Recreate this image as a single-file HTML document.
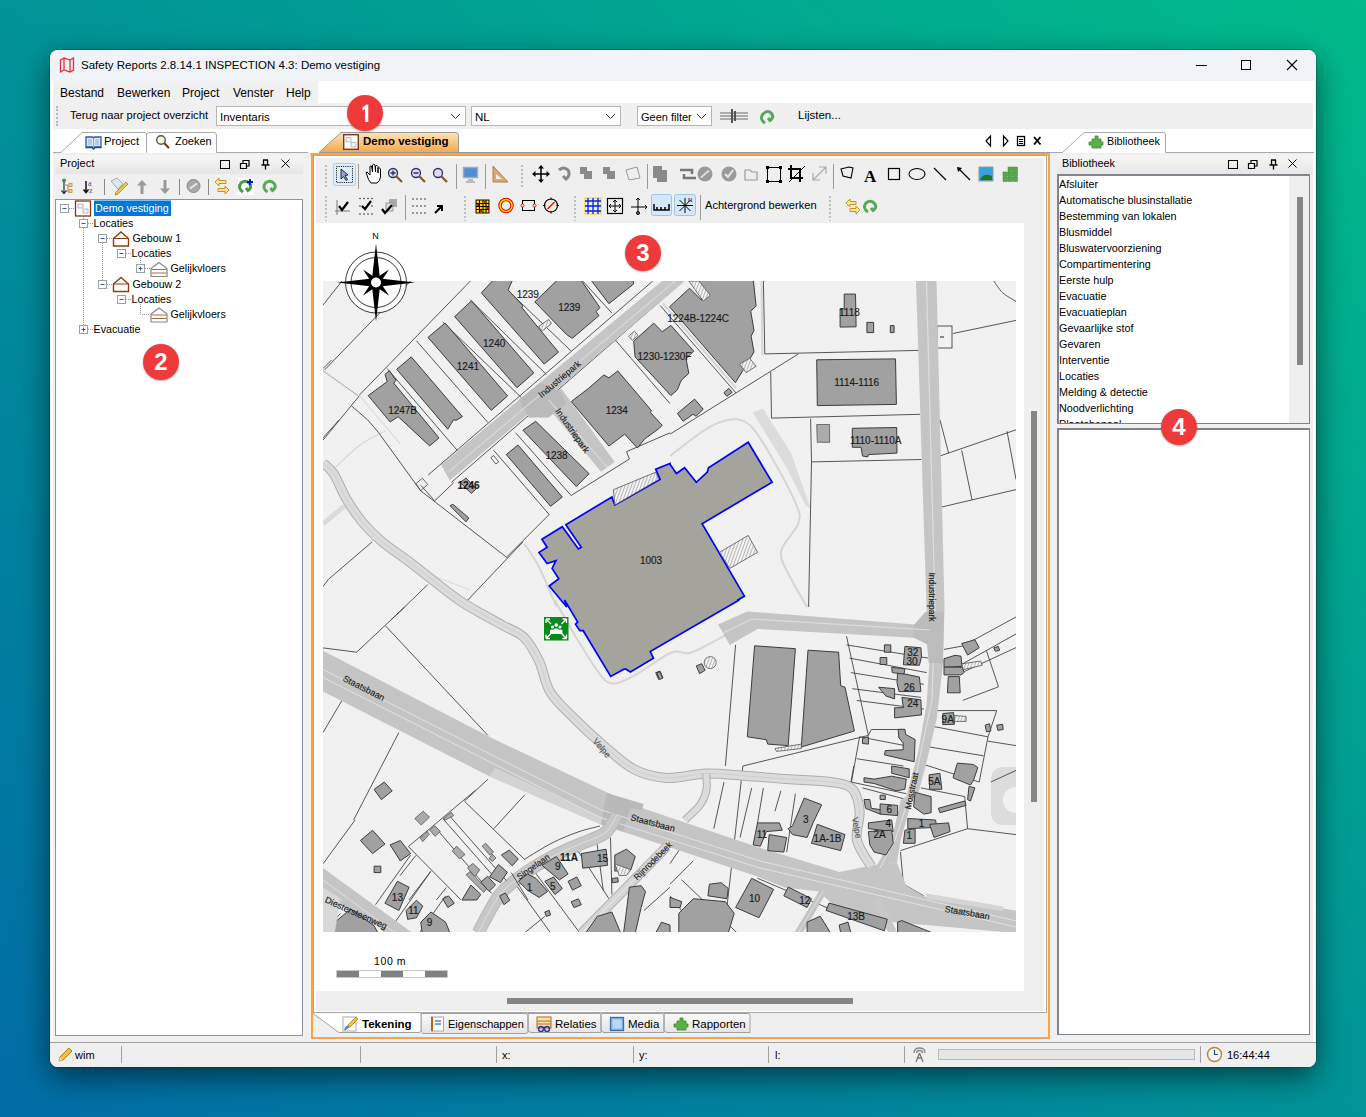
<!DOCTYPE html>
<html><head><meta charset="utf-8">
<style>
*{box-sizing:border-box;margin:0;padding:0}
html,body{width:1366px;height:1117px;overflow:hidden}
body{position:relative;font-family:"Liberation Sans",sans-serif;font-size:12px;color:#000;
background:linear-gradient(to top right,#006ca6 0%,#019397 50%,#00ba8a 100%)}
.a{position:absolute}
.t{position:absolute;white-space:nowrap;line-height:1}
.badge{position:absolute;width:36px;height:36px;border-radius:50%;background:#ef3a3c;color:#fff;font-weight:bold;font-size:24px;text-align:center;line-height:36px;box-shadow:0 1px 2px rgba(0,0,0,.3)}
.combo{position:absolute;background:#fff;border:1px solid #b6b6b6;height:20px}
.combo span{position:absolute;left:3px;top:4px;font-size:11.5px;white-space:nowrap}
.chev{position:absolute;right:4px;top:5px}
.ph{position:absolute;height:20px;background:linear-gradient(#f6f6f6,#e6e6e6)}
.sep{position:absolute;width:1px;background:#a0a0a0}
</style></head><body>
<!-- window -->
<div class="a" style="left:50px;top:50px;width:1266px;height:1017px;background:#f0f0f0;border-radius:8px;box-shadow:0 10px 30px rgba(0,0,0,.55),0 0 0 1px rgba(0,0,0,.18)"></div>
<!-- title bar -->
<div class="a" style="left:50px;top:50px;width:1266px;height:31px;background:#f0f3f8;border-radius:8px 8px 0 0"></div>
<svg class="a" style="left:59px;top:57px" width="16" height="16" viewBox="0 0 16 16"><path d="M1.5 3 L5 1 L11 3 L14.5 1 V13 L11 15 L5 13 L1.5 15 Z M5 1 V13 M11 3 V15" fill="none" stroke="#e8303c" stroke-width="1.3"/></svg>
<div class="t" style="left:81px;top:60px;font-size:11.5px">Safety Reports 2.8.14.1 INSPECTION 4.3: Demo vestiging</div>
<div class="a" style="left:1196px;top:65px;width:11px;height:1px;background:#000"></div>
<div class="a" style="left:1241px;top:60px;width:10px;height:10px;border:1px solid #000"></div>
<svg class="a" style="left:1286px;top:59px" width="12" height="12"><path d="M1 1L11 11M11 1L1 11" stroke="#000" stroke-width="1.1"/></svg>
<!-- menu bar -->
<div class="a" style="left:53px;top:81px;width:1260px;height:22px;background:#fff"></div>
<div class="a" style="left:53px;top:81px;width:265px;height:22px;background:#f0f0f0"></div>
<div class="t" style="left:60px;top:87px">Bestand</div>
<div class="t" style="left:117px;top:87px">Bewerken</div>
<div class="t" style="left:182px;top:87px">Project</div>
<div class="t" style="left:233px;top:87px">Venster</div>
<div class="t" style="left:286px;top:87px">Help</div>
<!-- toolbar -->
<div class="a" style="left:53px;top:103px;width:1260px;height:26px;background:#f0f0f0"></div>
<div class="a" style="left:56px;top:106px;width:2px;height:20px;border-left:2px dotted #b8b8b8"></div>
<div class="t" style="left:70px;top:110px;font-size:11.2px">Terug naar project overzicht</div>
<div class="combo" style="left:216px;top:106px;width:250px"><span>Inventaris</span><svg class="chev" width="11" height="8"><path d="M1 2L5.5 6.5L10 2" fill="none" stroke="#333"/></svg></div>
<div class="combo" style="left:471px;top:106px;width:150px"><span>NL</span><svg class="chev" width="11" height="8"><path d="M1 2L5.5 6.5L10 2" fill="none" stroke="#333"/></svg></div>
<div class="combo" style="left:637px;top:106px;width:75px"><span style="font-size:11px">Geen filter</span><svg class="chev" width="11" height="8"><path d="M1 2L5.5 6.5L10 2" fill="none" stroke="#333"/></svg></div>
<svg class="a" style="left:719px;top:108px" width="30" height="16"><path d="M1 5H29M1 8H29M1 11H29" stroke="#666" stroke-width="1"/><path d="M13 1V15M16 3V13" stroke="#555" stroke-width="2"/></svg>
<div class="t" style="left:798px;top:110px;font-size:11.5px">Lijsten...</div>
<svg class="a" style="left:759px;top:108px" width="17" height="17"><path d="M6 15Q0 11 4 6Q9 1 13 6Q15 10 11 12.5L9 10" stroke="#5aa85a" stroke-width="3" fill="none"/></svg>
<!-- tab strip white -->
<div class="a" style="left:53px;top:129px;width:1260px;height:24px;background:#fff"></div>
<!-- status bar -->
<div class="a" style="left:50px;top:1042px;width:1266px;height:1px;background:#a0a0a0"></div>
<div class="a" style="left:50px;top:1043px;width:1266px;height:24px;background:#efefef;border-radius:0 0 8px 8px"></div>

<!-- LEFT PANEL -->
<div class="a" style="left:51px;top:81px;width:2px;height:961px;background:#fff"></div>
<svg class="a" style="left:53px;top:129px" width="255" height="25">
<path d="M0 23.5H8L29 3.5Q30 3.5 31 3.5H92Q93 3.5 93.5 5V23.5M93.5 23.5V6Q94 3.5 96 3.5H161Q163 3.5 163.5 6V23.5H255" fill="#fff" stroke="#a9a9a9" stroke-width="1"/>
</svg>
<!-- book icon -->
<svg class="a" style="left:85px;top:135px" width="17" height="15" viewBox="0 0 17 15"><path d="M1 2H7Q8.5 2 8.5 3.5Q8.5 2 10 2H16V12H10Q8.5 12 8.5 13.5Q8.5 12 7 12H1Z" fill="#dfe9f5" stroke="#2a5d9a" stroke-width="1.3"/><path d="M8.5 3.5V13.5M3 5H7M3 7H7M3 9H7M10 5H14M10 7H14M10 9H14" stroke="#7a9ac0" stroke-width=".8"/><path d="M0.5 12.5H7L8.5 14L10 12.5H16.5" stroke="#1f4f8a" stroke-width="1.5" fill="none"/></svg>
<div class="t" style="left:104px;top:136px;font-size:11.3px">Project</div>
<svg class="a" style="left:155px;top:134px" width="16" height="16" viewBox="0 0 16 16"><circle cx="6" cy="6" r="4.3" fill="#f8f4d8" stroke="#555" stroke-width="1.4"/><path d="M9.3 9.3L14 14" stroke="#6a3d1a" stroke-width="2.2"/></svg>
<div class="t" style="left:175px;top:136px;font-size:11px">Zoeken</div>
<!-- panel header -->
<div class="ph" style="left:55px;top:155px;width:248px;height:19px"></div>
<div class="t" style="left:60px;top:158px;font-size:11px">Project</div>
<div class="a" style="left:220px;top:160px;width:10px;height:9px;border:1.2px solid #000"></div>
<svg class="a" style="left:239px;top:159px" width="12" height="11"><path d="M1.5 4.5H7.5V9.5H1.5Z M4 4.5V1.5H10V7H7.5" fill="none" stroke="#000" stroke-width="1.2"/></svg>
<svg class="a" style="left:261px;top:159px" width="9" height="11"><path d="M2.5 1V6M6.5 1V6M2 1H7M0.5 6H8.5M4.5 6V10.5" fill="none" stroke="#000" stroke-width="1.3"/></svg>
<svg class="a" style="left:281px;top:159px" width="9" height="9"><path d="M.5 .5L8.5 8.5M8.5 .5L.5 8.5" stroke="#000" stroke-width="1"/></svg>
<!-- panel toolbar -->
<svg class="a" style="left:56px;top:176px" width="240" height="22">
<circle cx="8" cy="4.5" r="2" fill="#3a9a4a"/><path d="M8 6V17M5.5 14.5L8 17.5L10.5 14.5" stroke="#333" stroke-width="1.2" fill="none"/><path d="M8 9H12V16H13" stroke="#888" fill="none"/><rect x="13" y="7.5" width="3" height="3" fill="#f5d56a" stroke="#c0902a" stroke-width=".8"/><rect x="13" y="13.5" width="3" height="3" fill="#f5d56a" stroke="#c0902a" stroke-width=".8"/>
<g transform="translate(2 0)"><path d="M28 5V16M25.5 13.5L28 16.5L30.5 13.5" stroke="#111" stroke-width="1.5" fill="none"/><text x="30" y="10" font-size="8" fill="#3a4aaa" font-family="Liberation Serif">a</text><text x="31" y="17" font-size="8" fill="#8a3a9a" font-family="Liberation Serif">z</text></g>
<rect x="48" y="3" width="1" height="16" fill="#888"/>
<g transform="translate(7 0)"><path d="M48 5L54 2L60 8L55 13Z" fill="#d8e8f5" stroke="#999" stroke-width=".8"/><path d="M53 16L63 6L65 8L55 18L52 19Z" fill="#f3c340" stroke="#b87b20" stroke-width=".8"/></g>
<path d="M86 4L81 9.5H84.5V18H87.5V9.5H91Z" fill="#9a9a9a"/>
<path d="M109 18L104 12.5H107.5V4H110.5V12.5H114Z" fill="#9a9a9a"/>
<rect x="123" y="3" width="1" height="16" fill="#888"/>
<circle cx="137.5" cy="10" r="6.5" fill="#a8a8a8" stroke="#8a8a8a"/><path d="M134 12.5L141 7.5" stroke="#e8e8e8" stroke-width="2"/>
<rect x="152" y="3" width="1" height="16" fill="#888"/>
<g transform="translate(1 0)"><path d="M158 6L162 2V4.5H169V7.5H162V10Z M172 14L168 10V12.5H161V15.5H168V18Z" fill="#fbe6a0" stroke="#c8921e" stroke-width="1"/></g>
<g transform="translate(4 0)"><rect x="178" y="2" width="16" height="17" fill="#fff"/>
<path d="M183 16Q177 12 181 7Q186 3 190 8Q192 12 188 14.5L186 12" stroke="#4a9a4a" stroke-width="3" fill="none"/><path d="M190 3V9M187 6H193" stroke="#0010e0" stroke-width="1.8"/></g>
<g transform="translate(5.5 0)"><path d="M206 16Q200 12 204 7Q209 3 213 8Q215 12 211 14.5L209 12" stroke="#5aa85a" stroke-width="3" fill="none"/></g>
</svg>
<!-- tree box -->
<div class="a" style="left:55px;top:199px;width:248px;height:837px;background:#fff;border:1px solid #8b949e"></div>
<svg class="a" style="left:56px;top:200px" width="246" height="140" font-family="Liberation Sans" font-size="10.7">
<g stroke="#999" stroke-dasharray="1 1" fill="none">
<path d="M13 8.5H19 M27.5 28V125 M32 23.5H37 M32 129.5H37 M46.5 43V80 M51 38.5H56 M51 84.5H56 M70 53.5H75 M70 99.5H75 M89 68.5H94 M84.5 104V114.5H94 M84.5 58V64 M27.5 14V19"/>
</g>
<g fill="#fff" stroke="#98a0a8">
<rect x="4.5" y="4.5" width="8" height="8"/>
<rect x="23.5" y="19.5" width="8" height="8"/>
<rect x="42.5" y="34.5" width="8" height="8"/>
<rect x="61.5" y="49.5" width="8" height="8"/>
<rect x="80.5" y="64.5" width="8" height="8"/>
<rect x="42.5" y="80.5" width="8" height="8"/>
<rect x="61.5" y="95.5" width="8" height="8"/>
<rect x="23.5" y="125.5" width="8" height="8"/>
</g>
<g stroke="#3a5aa0" stroke-width="1">
<path d="M6.5 8.5H10.5 M25.5 23.5H29.5 M44.5 38.5H48.5 M63.5 53.5H67.5 M82.5 68.5H86.5 M84.5 66.5V70.5 M44.5 84.5H48.5 M63.5 99.5H67.5 M25.5 129.5H29.5 M27.5 127.5V131.5"/>
</g>
<!-- doc icon -->
<rect x="19.5" y="1" width="15" height="15" fill="#fff" stroke="#7a3a1a" stroke-width="1.3"/>
<path d="M22 4H27V8H22Z M27 9H32V13H27Z" fill="#f4f4f4" stroke="#aaa" stroke-width=".8"/>
<rect x="38" y="0.5" width="77" height="15.5" fill="#0078d7"/>
<text x="39" y="12" fill="#fff">Demo vestiging</text>
<text x="37.5" y="27">Locaties</text>
<!-- house icons -->
<g fill="#fff" stroke="#8a3d10" stroke-width="1.4">
<path d="M57.5 38.5L65 32L72.5 38.5V46H57.5Z"/><path d="M57.5 38.5H72.5" stroke-width="1"/>
<path d="M57.5 84L65 77.5L72.5 84V91.5H57.5Z"/><path d="M57.5 84H72.5" stroke-width="1"/>
</g>
<text x="76.5" y="42">Gebouw 1</text>
<text x="75.5" y="57">Locaties</text>
<g fill="#fff" stroke="#888" stroke-width="1.2">
<path d="M95 68.5L103 62.5L111 68.5V76.5H95Z"/>
<path d="M95 114L103 108L111 114V122H95Z"/>
</g>
<path d="M95.5 69.5H110.5M95.5 73H110.5M95.5 115H110.5M95.5 118.5H110.5" stroke="#b06a3a" stroke-width="1"/>
<text x="114.5" y="72">Gelijkvloers</text>
<text x="76.5" y="88">Gebouw 2</text>
<text x="75.5" y="103">Locaties</text>
<text x="114.5" y="118">Gelijkvloers</text>
<text x="37.5" y="133">Evacuatie</text>
</svg>


<!-- CENTER PANEL -->
<!-- doc tab -->
<svg class="a" style="left:308px;top:129px" width="745" height="30">
<defs><linearGradient id="og" x1="0" y1="0" x2="0" y2="1"><stop offset="0" stop-color="#fde3b8"/><stop offset="1" stop-color="#f7a849"/></linearGradient></defs>
<path d="M11 23.5L33 3.5H148Q150 3.5 150.5 6V23.5H11" fill="url(#og)" stroke="#9a9a9a" stroke-width="1"/>
<path d="M150.5 23.5H742" stroke="#9a9a9a" stroke-width="1"/>
<rect x="2.5" y="24" width="739.5" height="2.6" fill="#f7a34a"/>
</svg>
<svg class="a" style="left:343px;top:134px" width="16" height="16"><rect x="0.7" y="0.7" width="14.6" height="14.6" fill="#fff" stroke="#7a3a1a" stroke-width="1.4"/><path d="M3 3.5H8V8H3Z M8 8.5H13V13H8Z" fill="#f3f3f3" stroke="#b0b0b0" stroke-width=".8"/></svg>
<div class="t" style="left:363px;top:136px;font-size:11.5px;font-weight:bold">Demo vestiging</div>
<svg class="a" style="left:984px;top:134px" width="60" height="14">
<path d="M6.5 2L2 7L6.5 12Z" fill="none" stroke="#000" stroke-width="1.2"/>
<path d="M19.5 2L24 7L19.5 12Z" fill="none" stroke="#000" stroke-width="1.2"/>
<rect x="33.5" y="2.5" width="7" height="9" fill="none" stroke="#000" stroke-width="1.3"/><path d="M35 5.5H39M35 7.5H39M35 9.5H39" stroke="#000"/>
<path d="M50 3L56.5 10.5M56.5 3L50 10.5" stroke="#000" stroke-width="1.8"/>
</svg>
<!-- frame -->
<div class="a" style="left:310.5px;top:153px;width:739px;height:885.5px;border:2.6px solid #f7a34a;border-top:none"></div>
<div class="a" style="left:313px;top:155px;width:734px;height:858px;border:1px solid #a8a8a8;background:#fff"></div>
<div class="a" style="left:316px;top:158px;width:728px;height:65px;background:#efefef"></div>
<!-- toolbar icons -->
<svg class="a" style="left:316px;top:158px" width="728" height="65" font-family="Liberation Serif">
<g stroke="#c0c0c0" stroke-width="2" stroke-dasharray="2 2"><path d="M10 7V31M206 7V31M10 38V63M149 38V63M259 38V63M514 38V63"/></g>
<g stroke="#9a9a9a" stroke-width="1"><path d="M42.5 6V31M140.5 6V31M169.5 6V31M331.5 6V31M517.5 6V31M89.5 37V62M384.5 37V62"/></g>
<!-- select btn -->
<rect x="17.5" y="5.5" width="22" height="22" rx="2" fill="#ddeeff" stroke="#a8cdf0"/>
<rect x="20.5" y="8.5" width="16" height="16" fill="none" stroke="#000" stroke-dasharray="1 1.2"/>
<path d="M25 11L25 21L27.5 18.5L30 22.5L31.5 21.5L29 17.5L32 17Z" fill="#9aa0e0" stroke="#000" stroke-width=".8"/>
<!-- hand -->
<path d="M51 17Q49 14 51 14L54 17V9Q54 7.5 55.5 8L56.5 14V7Q57.5 5.5 59 7L59.5 14V8Q61 6.5 62 8.5V15V10Q63.5 9 64.5 11V19Q64 23 61 25H55Q52 22 51 17Z" fill="#fff" stroke="#000" stroke-width="1"/>
<!-- zooms -->
<g stroke="#2a2a6a" stroke-width="1.3" fill="#dde" ><circle cx="77" cy="15" r="4.5"/><circle cx="100" cy="15" r="4.5"/><circle cx="122" cy="15" r="4.5"/></g>
<g stroke="#8a5a20" stroke-width="2.3"><path d="M80.5 18.5L86 24M103.5 18.5L109 24M125.5 18.5L131 24"/></g>
<path d="M74.5 15H79.5M77 12.5V17.5M97.5 15H102.5" stroke="#2a2a6a" stroke-width="1.3"/>
<!-- monitor -->
<rect x="147.5" y="9.5" width="14" height="10" fill="#4a90d9" stroke="#aaa" stroke-width="1.5"/><path d="M152 22H157M150 24H159" stroke="#aaa" stroke-width="1.5"/>
<!-- ruler -->
<path d="M177 8V24H192Z" fill="#d8aa70" stroke="#b08040"/><path d="M180 16V21H186Z" fill="#efefef"/>
<!-- move -->
<path d="M225 8V24M217 16H233" stroke="#000" stroke-width="1.5"/><path d="M225 7L222 10.5H228ZM225 25L222 21.5H228ZM216 16L219.5 13V19ZM234 16L230.5 13V19Z" fill="#000"/>
<path d="M243 12Q248 8 252 12Q255 17 250 21L247 18" fill="none" stroke="#888" stroke-width="3"/>
<g fill="#8a8a8a"><rect x="264" y="9" width="7" height="7"/><rect x="268" y="13" width="8" height="8"/><rect x="287" y="9" width="7" height="7"/><rect x="291" y="13" width="8" height="8"/><rect x="337" y="8" width="9" height="12"/><rect x="341" y="12" width="10" height="12"/></g>
<path d="M310 12L321 9L324 20L313 22Z" fill="none" stroke="#999"/>
<path d="M364 12H376V16M380 20H368V16" fill="none" stroke="#777" stroke-width="2.5"/>
<circle cx="389" cy="16" r="7.5" fill="#9a9a9a"/><path d="M385 19.5L393 12.5" stroke="#ddd" stroke-width="2"/>
<circle cx="413" cy="16" r="7.5" fill="#9a9a9a"/><path d="M409 16L412 19L417 12" stroke="#e8e8e8" stroke-width="2" fill="none"/>
<path d="M429 12H434L436 14H441V22H429Z" fill="none" stroke="#999" stroke-width="1.2"/>
<rect x="451.5" y="9.5" width="13" height="14" fill="none" stroke="#000"/><g fill="#000"><rect x="450" y="8" width="3" height="3"/><rect x="463" y="8" width="3" height="3"/><rect x="450" y="22" width="3" height="3"/><rect x="463" y="22" width="3" height="3"/></g>
<path d="M475 7V20H487M472 11H484V24" fill="none" stroke="#000" stroke-width="2"/><path d="M473 24L489 8" stroke="#000" stroke-width="1"/>
<path d="M497 22L510 9M503 9H510V16M504 22H497V15" fill="none" stroke="#aaa" stroke-width="1.2"/>
<path d="M525 11L533 9L537 10L535 20L527 18Z" fill="none" stroke="#000" stroke-width="1.1"/>
<text x="548" y="24" font-size="17" font-weight="bold">A</text>
<rect x="572.5" y="10.5" width="11" height="11" fill="none" stroke="#000" stroke-width="1.2"/>
<ellipse cx="601" cy="16" rx="8" ry="5.5" fill="none" stroke="#000" stroke-width="1.1"/>
<path d="M618 10L630 22" stroke="#000" stroke-width="1.2"/><path d="M642 10L654 22" stroke="#000" stroke-width="1.2"/><path d="M641 9L646 10L642 14Z" fill="#000"/>
<rect x="663" y="9" width="14" height="14" fill="#3aa0e0" stroke="#999"/><path d="M664 22Q667 14 676 18V22Z" fill="#1a7a20"/>
<g fill="#5aa84a" stroke="#3a8a3a" stroke-width=".5"><rect x="692" y="9" width="4.5" height="4.5"/><rect x="697" y="9" width="4.5" height="4.5"/><rect x="687" y="14" width="4.5" height="4.5"/><rect x="692" y="14" width="4.5" height="4.5"/><rect x="697" y="14" width="4.5" height="4.5"/><rect x="687" y="19" width="4.5" height="4.5"/><rect x="692" y="19" width="4.5" height="4.5"/><rect x="697" y="19" width="4.5" height="4.5"/></g>
<!-- row 2 -->
<path d="M21 42V57M19 53H34" stroke="#777" stroke-width="1"/><path d="M23 48L26 52L32 44" fill="none" stroke="#000" stroke-width="2.2"/>
<g fill="#000"><circle cx="44" cy="40.5" r=".7"/><circle cx="48" cy="40.5" r=".7"/><circle cx="52" cy="40.5" r=".7"/><circle cx="56" cy="40.5" r=".7"/><circle cx="44" cy="56" r=".7"/><circle cx="48" cy="56" r=".7"/><circle cx="52" cy="56" r=".7"/><circle cx="56" cy="56" r=".7"/><circle cx="44" cy="48" r=".7"/><circle cx="56" cy="48" r=".7"/></g>
<path d="M46 48L49 51L55 43" fill="none" stroke="#000" stroke-width="2.2"/>
<rect x="73" y="41" width="8" height="8" fill="#aaa"/><rect x="70" y="45" width="7" height="8" fill="#ddd" stroke="#888" stroke-width=".8"/><path d="M66 51L69 55L76 47" fill="none" stroke="#000" stroke-width="2.2"/>
<g fill="#000"><circle cx="97" cy="41" r=".7"/><circle cx="101" cy="41" r=".7"/><circle cx="105" cy="41" r=".7"/><circle cx="109" cy="41" r=".7"/><circle cx="97" cy="48" r=".7"/><circle cx="101" cy="48" r=".7"/><circle cx="105" cy="48" r=".7"/><circle cx="109" cy="48" r=".7"/><circle cx="97" cy="55" r=".7"/><circle cx="101" cy="55" r=".7"/><circle cx="105" cy="55" r=".7"/><circle cx="109" cy="55" r=".7"/></g>
<path d="M119 55L125 49M121 48H126V53" fill="none" stroke="#000" stroke-width="2"/>
<rect x="159" y="41" width="15" height="15" fill="#fff"/><rect x="160" y="42" width="13" height="13" fill="#ffd800" stroke="#000"/><path d="M163.5 42V55M167 42V55M170 42V55M160 45.5H173M160 48.5H173M160 51.5H173" stroke="#000" stroke-width="1"/><g fill="#e00"><rect x="161" y="46" width="2" height="2"/><rect x="168" y="43" width="2" height="2"/><rect x="164" y="52" width="2" height="2"/><rect x="171" y="49" width="2" height="2"/></g>
<circle cx="190" cy="47.5" r="6" fill="none" stroke="#e00" stroke-width="3.5"/><circle cx="190" cy="47.5" r="6" fill="none" stroke="#ffe000" stroke-width="1.5"/>
<rect x="206.5" y="42.5" width="12" height="10" fill="none" stroke="#000"/><circle cx="206.5" cy="47.5" r="1.5" fill="#fff" stroke="#e00"/><circle cx="218.5" cy="47.5" r="1.5" fill="#fff" stroke="#e00"/>
<circle cx="235" cy="47.5" r="6.5" fill="#f4f0e0" stroke="#000" stroke-width="1.2"/><path d="M231.5 51L238.5 44" stroke="#e00" stroke-width="1.3"/><path d="M235 39.5V42M235 53V55.5M227 47.5H229.5M240.5 47.5H243" stroke="#000"/>
<rect x="269" y="40" width="16" height="16" fill="none" stroke="#ffd000" stroke-width="1"/><path d="M272 40V56M277 40V56M282 40V56M269 43H285M269 48H285M269 53H285" stroke="#0020e0" stroke-width="1.3"/>
<rect x="291.5" y="40.5" width="15" height="15" fill="none" stroke="#000" stroke-width="1.2"/><path d="M299 42V54M293 48H305M297 44L299 42L301 44M297 52L299 54L301 52M295 46L293 48L295 50M303 46L305 48L303 50" fill="none" stroke="#000"/>
<path d="M322 40V56M315 49H331M320 42L322 40L324 42M329 47L331 49L329 51" fill="none" stroke="#000" stroke-width="1"/><circle cx="322" cy="55" r="1.5" fill="none" stroke="#000"/>
<rect x="335.5" y="36.5" width="20" height="21" rx="2" fill="#d4e8fa" stroke="#9ac4ec"/>
<path d="M338 46V52H353V46M341 49V52M345 49V52M349 49V52" fill="none" stroke="#000" stroke-width="1.5"/>
<rect x="358.5" y="36.5" width="21" height="21" rx="2" fill="#d4e8fa" stroke="#9ac4ec"/>
<path d="M369 40V55M361 47.5H377M363.5 42L374.5 53M374.5 42L363.5 53" stroke="#000" stroke-width="1"/><text x="372" y="44" font-size="6" font-family="Liberation Sans">N</text>
<path d="M530 45L534 41V43.5H540V46.5H534V49ZM544 52L540 48V50.5H534V53.5H540V56Z" fill="#fbe6a0" stroke="#c8921e" stroke-width="1"/>
<path d="M552 54Q546 50 550 45Q555 41 559 46Q561 50 557 52.5L555 50" stroke="#5aa85a" stroke-width="3" fill="none"/>
</svg>
<div class="t" style="left:705px;top:200px;font-size:11.1px">Achtergrond bewerken</div>
<!-- scrollbars -->
<div class="a" style="left:1024px;top:223px;width:20px;height:768px;background:#efefef"></div>
<div class="a" style="left:1031px;top:411px;width:6px;height:391px;background:#858585"></div>
<div class="a" style="left:316px;top:991px;width:728px;height:20px;background:#efefef"></div>
<div class="a" style="left:507px;top:998px;width:346px;height:6px;background:#858585"></div>
<div class="a" style="left:313px;top:1012px;width:734px;height:1px;background:#a8a8a8"></div>
<!-- MAP -->
<!--MAPSTART--><svg class="a" style="left:0;top:0" width="1366" height="1117" font-family="Liberation Sans">
<defs><clipPath id="mc"><rect x="323" y="281" width="693" height="651"/></clipPath>
<pattern id="hat" width="3" height="3" patternUnits="userSpaceOnUse" patternTransform="rotate(20)"><rect width="3" height="3" fill="#f4f4f4"/><path d="M0 0V3" stroke="#777" stroke-width="1"/></pattern></defs>
<g clip-path="url(#mc)">
<rect x="323" y="281" width="693" height="651" fill="#f1f1f1"/>
<polygon points="752.6,412.3 762.8,408.5 791.1,453.1 810.6,508.6 805.7,505.6 786.7,467.7" fill="#dcdcdc"/>
<rect x="991" y="767" width="60" height="58" rx="12" fill="#dcdcdc"/><circle cx="1016" cy="800" r="13" fill="#f1f1f1"/>
<path d="M670.0,456.0 C675.8,451.7 694.8,435.9 705.0,429.8 C715.2,423.7 723.7,420.3 731.3,419.6 C738.8,418.8 743.9,419.8 750.2,425.4 C756.5,431.0 761.7,440.2 769.2,453.1 C776.7,466.0 790.6,491.1 795.4,502.7 C800.3,514.4 800.8,514.9 798.4,523.1 C795.9,531.4 781.8,542.6 780.9,552.3 C779.9,562.0 788.2,572.4 792.5,581.5 C796.9,590.6 804.7,602.6 807.1,606.9" fill="none" stroke="#d6d6d6" stroke-width="2" stroke-linecap="butt" stroke-linejoin="round" />
<path d="M554.7,600.0 C558.7,607.0 571.5,629.6 578.8,641.7 C586.2,653.8 593.1,665.5 598.6,672.5 C604.1,679.4 605.9,682.9 611.8,683.5 C617.6,684.0 623.9,680.9 633.7,675.8 C643.6,670.6 661.6,656.6 671.1,652.7 C680.6,648.9 682.4,655.3 690.8,652.7 C699.3,650.1 712.8,641.7 721.6,637.3 C730.4,632.9 739.9,628.2 743.5,626.4" fill="none" stroke="#d6d6d6" stroke-width="2" stroke-linecap="butt" stroke-linejoin="round" />
<path d="M524.4,543.7 C526.8,547.5 533.6,556.5 539.0,567.0 C544.3,577.6 553.6,600.3 556.5,607.0" fill="none" stroke="#d6d6d6" stroke-width="2" stroke-linecap="butt" stroke-linejoin="round" />
<path d="M335.5,467.4 C339.6,463.7 351.6,451.1 360.0,445.0 C368.4,438.9 381.4,433.1 385.7,430.7" fill="none" stroke="#d8d8d8" stroke-width="1.2" stroke-linecap="butt" stroke-linejoin="round" />
<path d="M336.0,470.0 C339.7,478.3 347.3,505.0 358.0,520.0 C368.7,535.0 381.3,548.3 400.0,560.0 C418.7,571.7 458.3,585.0 470.0,590.0" fill="none" stroke="#d8d8d8" stroke-width="1" stroke-linecap="butt" stroke-linejoin="round" />
<polyline points="323.0,305.1 342.0,281.0" fill="none" stroke="#444" stroke-width="0.9" />
<polyline points="324.5,370.0 410.6,281.0" fill="none" stroke="#444" stroke-width="0.9" />
<polyline points="359.5,394.9 470.4,281.0" fill="none" stroke="#444" stroke-width="0.9" />
<polyline points="323.0,370.8 358.0,395.6" fill="none" stroke="#999" stroke-width="0.9" />
<polyline points="359.5,395.6 323.0,440.1" fill="none" stroke="#444" stroke-width="0.9" />
<polyline points="359.5,395.6 400.4,444.0" fill="none" stroke="#cfcfcf" stroke-width="0.9" />
<polyline points="351.5,405.8 367.8,420.0 378.5,432.5 420.6,490.7" fill="none" stroke="#444" stroke-width="0.9" />
<path d="M351.5,405.8 C354.0,407.4 362.3,411.5 366.8,415.3 C371.3,419.1 375.3,423.6 378.5,428.4 C381.6,433.2 384.5,441.4 385.8,444.0" fill="none" stroke="#444" stroke-width="0.9" stroke-linecap="butt" stroke-linejoin="round" opacity="0"/>
<polyline points="387.2,368.6 457.2,450.3" fill="none" stroke="#444" stroke-width="0.9" />
<polyline points="416.4,340.8 487.9,422.5" fill="none" stroke="#444" stroke-width="0.9" />
<polyline points="442.7,321.9 521.5,397.7" fill="none" stroke="#444" stroke-width="0.9" />
<polyline points="470.4,300.0 546.3,374.4" fill="none" stroke="#444" stroke-width="0.9" />
<polyline points="498.1,281.0 571.1,351.0" fill="none" stroke="#444" stroke-width="0.9" />
<polyline points="582.7,281.0 611.9,313.1" fill="none" stroke="#444" stroke-width="0.9" />
<polyline points="428.1,475.1 652.8,281.0" fill="none" stroke="#444" stroke-width="0.9" />
<polyline points="451.4,482.4 670.0,292.7" fill="none" stroke="#444" stroke-width="0.9" />
<polyline points="420.6,490.7 507.4,557.9" fill="none" stroke="#444" stroke-width="0.9" />
<polyline points="434.0,501.5 453.7,482.7" fill="none" stroke="#444" stroke-width="0.9" />
<polyline points="493.7,450.3 549.2,514.5 506.9,556.8" fill="none" stroke="#444" stroke-width="0.9" />
<polyline points="515.6,432.8 571.1,495.5 629.4,459.0 626.5,451.7 670.0,432.8" fill="none" stroke="#444" stroke-width="0.9" />
<polyline points="323.0,586.5 328.4,579.4 372.2,541.8" fill="none" stroke="#444" stroke-width="0.9" />
<polyline points="391.0,620.0 427.7,584.7" fill="none" stroke="#444" stroke-width="0.9" />
<polyline points="466.2,601.7 523.0,541.8" fill="none" stroke="#444" stroke-width="0.9" />
<polyline points="323.0,437.9 339.1,420.0" fill="none" stroke="#444" stroke-width="0.9" />
<polyline points="614.8,339.4 670.0,403.6" fill="none" stroke="#444" stroke-width="0.9" />
<polyline points="323.0,368.6 331.8,359.8" fill="none" stroke="#444" stroke-width="0.9" />
<polyline points="420.8,485.3 433.9,499.9" fill="none" stroke="#444" stroke-width="0.9" />
<polyline points="763.4,281.0 764.8,353.9 919.4,350.4" fill="none" stroke="#444" stroke-width="0.9" />
<polyline points="670.0,434.2 798.4,353.9" fill="none" stroke="#444" stroke-width="0.9" />
<polyline points="770.7,372.0 771.5,418.1 920.0,414.3" fill="none" stroke="#444" stroke-width="0.9" />
<polyline points="810.6,418.7 811.5,461.9 921.5,459.5" fill="none" stroke="#444" stroke-width="0.9" />
<polyline points="811.5,461.9 808.6,606.9" fill="none" stroke="#444" stroke-width="0.9" />
<polyline points="939.9,419.6 948.6,453.1" fill="none" stroke="#444" stroke-width="0.9" />
<polyline points="939.9,456.0 1016.0,429.8" fill="none" stroke="#444" stroke-width="0.9" />
<polyline points="961.7,450.2 972.0,499.8" fill="none" stroke="#444" stroke-width="0.9" />
<polyline points="941.3,507.1 1016.0,489.6" fill="none" stroke="#444" stroke-width="0.9" />
<polyline points="1007.0,431.2 1016.0,479.4" fill="none" stroke="#444" stroke-width="0.9" />
<polyline points="953.0,333.5 1016.0,320.4" fill="none" stroke="#444" stroke-width="0.9" />
<rect x="937" y="326" width="15" height="22" fill="#f1f1f1" stroke="#444" stroke-width=".9"/><path d="M940 337H944" stroke="#222"/>
<path d="M993.8,281.0 C995.3,282.9 998.9,289.3 1002.6,292.7 C1006.3,296.1 1013.8,300.0 1016.0,301.4" fill="none" stroke="#444" stroke-width="0.9" stroke-linecap="butt" stroke-linejoin="round" />
<polyline points="323.0,647.9 356.6,652.2 404.7,607.0" fill="none" stroke="#444" stroke-width="0.9" />
<polyline points="385.7,626.0 487.9,735.4" fill="none" stroke="#444" stroke-width="0.9" />
<polyline points="323.0,732.5 342.0,700.4" fill="none" stroke="#444" stroke-width="0.9" />
<polyline points="353.6,820.0 398.9,732.5" fill="none" stroke="#444" stroke-width="0.9" />
<polyline points="323.0,863.8 355.1,820.0" fill="none" stroke="#444" stroke-width="0.9" />
<polyline points="464.5,801.1 487.9,779.2" fill="none" stroke="#444" stroke-width="0.9" />
<polyline points="493.7,828.8 524.4,795.2" fill="none" stroke="#444" stroke-width="0.9" />
<polyline points="375.5,904.7 410.6,855.1" fill="none" stroke="#444" stroke-width="0.9" />
<polyline points="393.0,925.1 431.0,871.1" fill="none" stroke="#444" stroke-width="0.9" />
<polyline points="419.3,933.0 445.6,895.9" fill="none" stroke="#444" stroke-width="0.9" />
<path d="M525.0,859.0 C529.5,856.3 543.2,847.5 552.0,843.0 C560.8,838.5 570.0,834.8 578.0,832.0 C586.0,829.2 596.3,827.0 600.0,826.0" fill="none" stroke="#444" stroke-width="0.9" stroke-linecap="butt" stroke-linejoin="round" />
<polyline points="515.6,884.3 550.6,933.0" fill="none" stroke="#444" stroke-width="0.9" />
<polyline points="533.1,869.7 579.8,933.0" fill="none" stroke="#444" stroke-width="0.9" />
<polyline points="576.9,849.2 609.0,898.8" fill="none" stroke="#444" stroke-width="0.9" />
<polyline points="595.9,834.6 603.2,890.1" fill="none" stroke="#444" stroke-width="0.9" />
<polyline points="610.5,837.6 611.9,894.5" fill="none" stroke="#444" stroke-width="0.9" />
<polyline points="323.0,933.0 340.5,913.4" fill="none" stroke="#444" stroke-width="0.9" />
<polyline points="524.4,933.0 544.8,916.4" fill="none" stroke="#444" stroke-width="0.9" />
<polyline points="644.0,910.5 670.0,887.2" fill="none" stroke="#444" stroke-width="0.9" />
<polyline points="846.5,636.2 868.4,735.4 742.9,766.0 724.0,932.9" fill="none" stroke="#444" stroke-width="0.9" />
<polyline points="735.6,644.9 725.4,766.0" fill="none" stroke="#444" stroke-width="0.9" />
<polyline points="846.5,644.9 928.2,658.1" fill="none" stroke="#444" stroke-width="0.9" />
<polyline points="849.4,658.1 926.7,672.6" fill="none" stroke="#444" stroke-width="0.9" />
<polyline points="850.9,672.6 923.8,684.3" fill="none" stroke="#444" stroke-width="0.9" />
<polyline points="852.3,688.7 920.9,697.4" fill="none" stroke="#444" stroke-width="0.9" />
<polyline points="856.7,700.4 923.8,709.1" fill="none" stroke="#444" stroke-width="0.9" />
<polyline points="868.4,735.4 871.3,729.5 904.9,729.5" fill="none" stroke="#444" stroke-width="0.9" />
<polyline points="859.6,736.8 912.1,747.0" fill="none" stroke="#444" stroke-width="0.9" />
<polyline points="856.7,758.7 903.4,766.0" fill="none" stroke="#444" stroke-width="0.9" />
<polyline points="853.8,766.0 850.9,782.0" fill="none" stroke="#444" stroke-width="0.9" />
<polyline points="850.9,782.0 906.3,793.7" fill="none" stroke="#444" stroke-width="0.9" />
<polyline points="859.6,736.8 850.9,785.0" fill="none" stroke="#444" stroke-width="0.9" />
<polyline points="862.5,787.9 912.1,801.0" fill="none" stroke="#444" stroke-width="0.9" />
<polyline points="944.0,649.4 962.7,646.0 1016.0,617.0" fill="none" stroke="#444" stroke-width="0.9" />
<polyline points="962.7,700.4 998.5,686.8 986.6,651.1" fill="none" stroke="#444" stroke-width="0.9" />
<polyline points="961.0,664.7 1016.0,634.0" fill="none" stroke="#444" stroke-width="0.9" />
<polyline points="964.4,671.5 1016.0,647.6" fill="none" stroke="#444" stroke-width="0.9" />
<polyline points="935.5,710.6 996.7,710.6 988.0,736.8" fill="none" stroke="#444" stroke-width="0.9" />
<polyline points="934.0,726.6 988.0,736.8" fill="none" stroke="#444" stroke-width="0.9" />
<polyline points="929.6,747.0 983.6,755.8" fill="none" stroke="#444" stroke-width="0.9" />
<polyline points="923.8,764.5 979.2,782.0" fill="none" stroke="#444" stroke-width="0.9" />
<polyline points="920.9,787.9 964.7,796.6" fill="none" stroke="#444" stroke-width="0.9" />
<polyline points="988.0,736.8 979.2,782.0" fill="none" stroke="#444" stroke-width="0.9" />
<polyline points="988.0,741.2 1016.0,745.6" fill="none" stroke="#444" stroke-width="0.9" />
<polyline points="964.7,796.6 967.6,828.7" fill="none" stroke="#444" stroke-width="0.9" />
<polyline points="967.6,828.7 1016.0,834.6" fill="none" stroke="#444" stroke-width="0.9" />
<polyline points="900.5,850.6 967.6,828.7" fill="none" stroke="#444" stroke-width="0.9" />
<polyline points="900.5,852.1 903.4,884.2 923.8,895.8" fill="none" stroke="#444" stroke-width="0.9" />
<polyline points="670.0,884.2 693.3,860.8" fill="none" stroke="#444" stroke-width="0.9" />
<polyline points="670.0,863.7 681.7,846.2" fill="none" stroke="#444" stroke-width="0.9" />
<polyline points="713.8,828.7 724.0,782.0" fill="none" stroke="#444" stroke-width="0.9" />
<polyline points="740.0,837.5 751.7,787.9" fill="none" stroke="#444" stroke-width="0.9" />
<polyline points="757.5,822.9 763.4,787.9" fill="none" stroke="#444" stroke-width="0.9" />
<polyline points="775.0,811.2 780.9,790.8" fill="none" stroke="#444" stroke-width="0.9" />
<polyline points="786.7,852.1 795.4,793.7" fill="none" stroke="#444" stroke-width="0.9" />
<polyline points="681.7,879.8 737.1,932.9" fill="none" stroke="#444" stroke-width="0.9" />
<polyline points="670.0,895.8 699.2,932.9" fill="none" stroke="#444" stroke-width="0.9" />
<polyline points="757.5,878.3 833.4,910.4" fill="none" stroke="#444" stroke-width="0.9" />
<polyline points="990.9,782.0 1016.0,770.4" fill="none" stroke="#444" stroke-width="0.9" />
<polygon points="323.0,650.8 495.2,739.8 608.3,792.9 642.7,808.3 756.0,846.6 839.7,871.9 870.2,865.7 896.8,862.8 906.4,885.7 927.3,898.0 1016.0,910.4 1016.0,933.0 889.2,921.8 832.1,903.7 818.8,891.4 784.6,887.6 756.0,876.1 623.0,831.7 601.0,824.4 489.4,776.3 323.0,691.6" fill="#c5c5c5"/>
<polygon points="489.4,776.3 601.0,824.4 604.0,818.0 495.0,768.0" fill="#d3d3d3"/>
<polygon points="925.4,893.3 1003.4,906.6 1003.4,911.3 927.3,899.0" fill="#d5d5d5"/>
<polygon points="606.9,792.9 643.5,803.9 642.0,809.8 630.3,808.3 623.0,831.7 601.0,824.4 603.9,808.3" fill="#b9b9b9"/>
<polyline points="323.0,669.5 600.0,809.5 760.0,861.0 1016.0,921.0" fill="none" stroke="#e2e2e2" stroke-width="1" />
<polyline points="323.0,677.5 600.0,817.5 760.0,868.0 1016.0,927.0" fill="none" stroke="#e2e2e2" stroke-width="1" />
<polygon points="440.9,464.8 662.2,281.0 685.0,281.0 449.8,480.6" fill="#c5c5c5"/>
<polygon points="539.7,397.6 561.4,388.7 614.8,461.9 601.0,471.7" fill="#c5c5c5"/>
<polygon points="518.9,399.6 540.7,382.8 560.5,391.7 566.4,403.5 548.6,417.4 528.8,417.4" fill="#bababa"/>
<polyline points="448.8,471.7 675.1,281.0" fill="none" stroke="#d8d8d8" stroke-width="1.2" />
<polyline points="548.6,399.6 606.9,466.8" fill="none" stroke="#d8d8d8" stroke-width="1.2" />
<polygon points="916.0,281.0 936.5,281.0 944.5,607.0 942.8,665.3 936.9,717.9 926.7,761.6 915.1,805.4 912.1,800.0 900.7,840.0 896.8,862.8 870.2,866.6 874.2,869.6 891.7,840.4 900.7,800.0 906.3,796.6 918.0,752.9 926.7,703.3 929.6,659.5 926.5,607.0" fill="#c5c5c5"/>
<polyline points="926.5,281.0 935.0,607.0 932.0,700.0 915.0,780.0 895.0,840.0 880.0,868.0" fill="none" stroke="#dedede" stroke-width="1.2" />
<polygon points="718.1,624.5 747.3,611.4 915.1,624.5 930.0,618.0 930.0,638.0 918.0,638.0 757.5,629.0 729.8,645.0" fill="#c5c5c5"/>
<polygon points="913.4,625.5 925.3,611.9 944.0,611.9 943.0,663.0 928.7,663.0 927.0,644.2 913.4,637.6" fill="#bcbcbc"/>
<polyline points="723.0,633.0 752.0,619.0 930.0,630.0" fill="none" stroke="#dedede" stroke-width="1.2" />
<path d="M617.0,815.0 C615.0,818.0 611.3,828.1 605.0,833.0 C598.7,837.9 587.7,840.6 579.0,844.5 C570.3,848.4 561.5,851.8 552.7,856.4 C543.9,861.0 535.2,865.8 526.4,872.2 C517.6,878.6 508.1,884.5 500.0,894.6 C491.9,904.7 481.7,926.6 478.0,933.0" fill="none" stroke="#b8b8b8" stroke-width="13" stroke-linecap="butt" stroke-linejoin="round" />
<path d="M617.0,815.0 C615.0,818.0 611.3,828.1 605.0,833.0 C598.7,837.9 587.7,840.6 579.0,844.5 C570.3,848.4 561.5,851.8 552.7,856.4 C543.9,861.0 535.2,865.8 526.4,872.2 C517.6,878.6 508.1,884.5 500.0,894.6 C491.9,904.7 481.7,926.6 478.0,933.0" fill="none" stroke="#c8c8c8" stroke-width="11" stroke-linecap="butt" stroke-linejoin="round" />
<path d="M617.0,815.0 C615.0,818.0 611.3,828.1 605.0,833.0 C598.7,837.9 587.7,840.6 579.0,844.5 C570.3,848.4 561.5,851.8 552.7,856.4 C543.9,861.0 535.2,865.8 526.4,872.2 C517.6,878.6 508.1,884.5 500.0,894.6 C491.9,904.7 481.7,926.6 478.0,933.0" fill="none" stroke="#e0e0e0" stroke-width="1" stroke-linecap="butt" stroke-linejoin="round" />
<polyline points="666.9,846.4 581.8,933.0" fill="none" stroke="#b0b0b0" stroke-width="10" />
<polyline points="666.9,846.4 581.8,933.0" fill="none" stroke="#d6d6d6" stroke-width="8" />
<polyline points="666.9,846.4 581.8,933.0" fill="none" stroke="#ececec" stroke-width="1" />
<polygon points="818.8,891.4 828.3,889.5 802.6,933.0 794.1,933.0" fill="#c5c5c5"/>
<polyline points="823.5,890.5 798.0,933.0" fill="none" stroke="#e0e0e0" stroke-width="1" />
<polyline points="877.0,900.0 893.0,933.0" fill="none" stroke="#c8c8c8" stroke-width="8" />
<polygon points="323.0,868.1 410.8,931.7 410.8,933.0 384.0,933.0 380.0,928.0 345.0,907.0 323.0,895.0" fill="#c5c5c5"/>
<polyline points="323.0,880.0 395.0,933.0" fill="none" stroke="#e0e0e0" stroke-width="1" />
<polygon points="323.0,913.0 334.0,894.0 341.0,899.0 328.0,920.0" fill="#d3d3d3"/>
<path d="M323.0,463.0 C324.8,464.8 329.8,467.7 333.7,473.7 C337.6,479.7 341.5,490.7 346.3,498.8 C351.1,506.9 356.4,514.9 362.4,522.1 C368.4,529.3 374.4,535.2 382.1,541.8 C389.9,548.4 400.2,555.0 408.9,561.5 C417.5,568.0 425.0,574.2 434.0,581.1 C443.0,588.0 451.4,595.3 462.7,602.6 C474.0,609.9 491.8,619.2 502.0,625.0 C512.2,630.8 517.7,631.2 523.9,637.3 C530.1,643.4 534.9,652.4 539.3,661.5 C543.7,670.6 544.4,682.7 550.3,692.2 C556.1,701.7 565.6,709.8 574.4,718.6 C583.2,727.4 593.1,736.6 603.0,745.0 C612.9,753.4 623.1,763.6 633.7,769.1 C644.3,774.6 654.6,777.2 666.7,777.9 C678.8,778.6 693.4,773.9 706.2,773.5 C719.0,773.1 730.1,774.8 743.5,775.7 C756.9,776.6 772.2,778.1 786.7,779.1 C801.2,780.1 819.6,780.4 830.5,782.0 C841.4,783.6 847.4,784.1 852.3,789.0 C857.1,793.9 858.8,802.6 859.6,811.2 C860.4,819.8 855.0,831.2 857.0,840.4 C859.0,849.6 868.9,862.2 871.3,866.6" fill="none" stroke="#aeaeae" stroke-width="10" stroke-linecap="butt" stroke-linejoin="round" />
<path d="M323.0,463.0 C324.8,464.8 329.8,467.7 333.7,473.7 C337.6,479.7 341.5,490.7 346.3,498.8 C351.1,506.9 356.4,514.9 362.4,522.1 C368.4,529.3 374.4,535.2 382.1,541.8 C389.9,548.4 400.2,555.0 408.9,561.5 C417.5,568.0 425.0,574.2 434.0,581.1 C443.0,588.0 451.4,595.3 462.7,602.6 C474.0,609.9 491.8,619.2 502.0,625.0 C512.2,630.8 517.7,631.2 523.9,637.3 C530.1,643.4 534.9,652.4 539.3,661.5 C543.7,670.6 544.4,682.7 550.3,692.2 C556.1,701.7 565.6,709.8 574.4,718.6 C583.2,727.4 593.1,736.6 603.0,745.0 C612.9,753.4 623.1,763.6 633.7,769.1 C644.3,774.6 654.6,777.2 666.7,777.9 C678.8,778.6 693.4,773.9 706.2,773.5 C719.0,773.1 730.1,774.8 743.5,775.7 C756.9,776.6 772.2,778.1 786.7,779.1 C801.2,780.1 819.6,780.4 830.5,782.0 C841.4,783.6 847.4,784.1 852.3,789.0 C857.1,793.9 858.8,802.6 859.6,811.2 C860.4,819.8 855.0,831.2 857.0,840.4 C859.0,849.6 868.9,862.2 871.3,866.6" fill="none" stroke="#dcdcdc" stroke-width="8" stroke-linecap="butt" stroke-linejoin="round" />
<path d="M323.0,463.0 C324.8,464.8 329.8,467.7 333.7,473.7 C337.6,479.7 341.5,490.7 346.3,498.8 C351.1,506.9 356.4,514.9 362.4,522.1 C368.4,529.3 374.4,535.2 382.1,541.8 C389.9,548.4 400.2,555.0 408.9,561.5 C417.5,568.0 425.0,574.2 434.0,581.1 C443.0,588.0 451.4,595.3 462.7,602.6 C474.0,609.9 491.8,619.2 502.0,625.0 C512.2,630.8 517.7,631.2 523.9,637.3 C530.1,643.4 534.9,652.4 539.3,661.5 C543.7,670.6 544.4,682.7 550.3,692.2 C556.1,701.7 565.6,709.8 574.4,718.6 C583.2,727.4 593.1,736.6 603.0,745.0 C612.9,753.4 623.1,763.6 633.7,769.1 C644.3,774.6 654.6,777.2 666.7,777.9 C678.8,778.6 693.4,773.9 706.2,773.5 C719.0,773.1 730.1,774.8 743.5,775.7 C756.9,776.6 772.2,778.1 786.7,779.1 C801.2,780.1 819.6,780.4 830.5,782.0 C841.4,783.6 847.4,784.1 852.3,789.0 C857.1,793.9 858.8,802.6 859.6,811.2 C860.4,819.8 855.0,831.2 857.0,840.4 C859.0,849.6 868.9,862.2 871.3,866.6" fill="none" stroke="#cfcfcf" stroke-width="1" stroke-linecap="butt" stroke-linejoin="round" />
<polyline points="323.0,523.9 344.5,506.0" fill="none" stroke="#dadada" stroke-width="5" />
<path d="M706.2,773.5 C706.2,776.2 707.5,784.8 706.5,790.0 C705.5,795.2 703.6,800.0 700.0,805.0 C696.4,810.0 687.5,817.5 685.0,820.0" fill="none" stroke="#aeaeae" stroke-width="8" stroke-linecap="butt" stroke-linejoin="round" />
<path d="M706.2,773.5 C706.2,776.2 707.5,784.8 706.5,790.0 C705.5,795.2 703.6,800.0 700.0,805.0 C696.4,810.0 687.5,817.5 685.0,820.0" fill="none" stroke="#dcdcdc" stroke-width="6" stroke-linecap="butt" stroke-linejoin="round" />
<polyline points="663.0,303.5 736.0,388.0" fill="none" stroke="#d6d6d6" stroke-width="2" />
<polyline points="660.2,305.5 735.9,392.9" fill="none" stroke="#444" stroke-width="0.9" />
<polyline points="761.5,281.0 762.5,355.6" fill="none" stroke="#d6d6d6" stroke-width="2" />
<polygon points="481.4,292.9 494.2,279.0 513.0,279.0 508.1,289.9 522.9,305.7 521.9,307.7 558.5,352.2 544.2,364.0" fill="#a1a1a1" stroke="#3c3c3c" stroke-width="1" />
<polygon points="534.8,301.8 558.5,279.0 580.2,279.0 600.0,307.7 596.0,311.6 599.0,315.6 572.3,338.3 566.4,334.4" fill="#a1a1a1" stroke="#3c3c3c" stroke-width="1" />
<polygon points="590.1,279.0 633.6,279.0 633.6,284.0 608.9,303.7" fill="#a1a1a1" stroke="#3c3c3c" stroke-width="1" />
<polygon points="454.7,316.6 471.5,300.8 533.8,372.9 517.0,387.7" fill="#a1a1a1" stroke="#3c3c3c" stroke-width="1" />
<polygon points="428.0,337.4 445.1,323.0 507.6,395.9 491.3,410.3" fill="#a1a1a1" stroke="#3c3c3c" stroke-width="1" />
<polygon points="571.3,401.6 588.1,388.7 603.9,374.9 608.9,377.9 617.8,370.9 651.4,410.5 650.4,412.4 662.2,425.3 659.3,428.3 644.5,439.1 637.5,448.0 624.7,434.2 608.9,446.0" fill="#a1a1a1" stroke="#3c3c3c" stroke-width="1" />
<polygon points="522.9,430.2 535.7,421.3 589.1,473.7 576.3,486.6" fill="#a1a1a1" stroke="#3c3c3c" stroke-width="1" />
<polygon points="506.3,454.6 518.0,445.0 562.3,497.0 550.6,506.3" fill="#a1a1a1" stroke="#3c3c3c" stroke-width="1" />
<polygon points="633.7,341.1 653.8,323.2 662.3,331.8 670.9,325.4 693.8,351.2 686.0,358.3 688.8,373.4 681.7,379.8 680.2,382.7 677.4,389.8 670.9,395.6 635.1,356.9" fill="#a1a1a1" stroke="#3c3c3c" stroke-width="1" />
<polygon points="669.5,306.8 689.6,288.2 701.7,300.3 698.9,279.6 753.3,279.6 756.1,306.1 750.7,311.1 754.0,330.4 751.1,336.1 754.0,351.9 735.4,382.7" fill="#a1a1a1" stroke="#3c3c3c" stroke-width="1" />
<polygon points="739.7,364.1 749.7,358.3 756.1,366.2 746.1,372.7" fill="url(#hat)" stroke="#555" stroke-width="0.8" />
<polygon points="628.7,336.1 634.4,331.1 638.0,335.4 632.3,340.4" fill="url(#hat)" stroke="#555" stroke-width="0.8" />
<polygon points="688.8,281.0 698.9,281.0 710.3,295.3 703.2,301.0" fill="url(#hat)" stroke="#555" stroke-width="0.8" />
<polygon points="538.7,326.5 548.6,319.5 551.6,323.5 541.7,331.4" fill="url(#hat)" stroke="#555" stroke-width="0.8" />
<polygon points="677.4,413.5 694.6,399.1 703.2,409.2 696.0,416.3 693.1,414.2 683.1,421.3" fill="#a1a1a1" stroke="#3c3c3c" stroke-width="1" />
<polygon points="723.9,392.7 728.9,388.4 732.1,392.4 726.8,396.3" fill="#a1a1a1" stroke="#3c3c3c" stroke-width="1" />
<polygon points="396.7,369.3 411.3,356.9 462.4,416.7 455.8,420.4 453.6,419.7 451.4,423.3 447.8,429.2" fill="#a1a1a1" stroke="#3c3c3c" stroke-width="1" />
<polygon points="368.2,395.6 387.2,381.7 385.0,374.4 389.4,370.8 396.0,380.3 393.8,383.2 439.0,437.9 429.6,445.9 398.2,416.7 390.1,421.9" fill="#a1a1a1" stroke="#3c3c3c" stroke-width="1" />
<polygon points="460.2,482.4 466.0,478.0 476.2,488.8 471.3,493.5" fill="#a1a1a1" stroke="#3c3c3c" stroke-width="1" />
<polygon points="450.0,505.7 452.9,504.3 468.9,518.0 466.0,521.8" fill="#a1a1a1" stroke="#3c3c3c" stroke-width="1" />
<polygon points="490.8,457.6 493.7,455.5 498.7,461.9 495.8,464.0" fill="none" stroke="#444" stroke-width="0.8" />
<polygon points="416.1,483.6 422.4,478.2 427.7,484.5 420.6,490.7" fill="none" stroke="#444" stroke-width="0.8" />
<polygon points="816.7,359.8 895.5,358.9 896.4,404.4 817.3,405.6" fill="#a1a1a1" stroke="#3c3c3c" stroke-width="1" />
<polygon points="844.2,294.1 855.5,294.1 856.1,326.8 840.1,327.1 840.1,308.7 844.2,308.7" fill="#a1a1a1" stroke="#3c3c3c" stroke-width="1" />
<polygon points="866.9,322.4 873.6,322.4 873.6,332.6 866.9,332.6" fill="#a1a1a1" stroke="#3c3c3c" stroke-width="1" />
<polygon points="890.3,325.6 894.1,325.6 894.1,332.6 890.3,332.6" fill="#a1a1a1" stroke="#3c3c3c" stroke-width="1" />
<polygon points="852.3,428.3 896.7,427.5 897.0,453.1 868.4,454.6 867.8,456.9 862.5,456.0 861.1,447.3 852.3,447.3" fill="#a1a1a1" stroke="#3c3c3c" stroke-width="1" />
<polygon points="816.7,424.5 829.6,424.5 829.6,442.3 817.3,442.3" fill="#ababab" stroke="#555" stroke-width="0.8" />
<polygon points="541.9,539.3 562.3,526.7 578.4,548.9 581.3,547.2 565.8,524.7 611.9,497.0 614.8,505.1 660.1,479.5 655.7,469.2 670.0,463.4 670.0,464.2 676.4,473.5 684.6,467.7 696.3,482.3 707.3,472.1 708.5,467.7 748.2,442.3 772.1,482.3 702.1,523.7 744.4,596.1 737.1,600.5 739.2,600.0 650.2,651.6 653.5,658.2 630.4,672.0 626.0,669.2 623.9,669.2 610.7,676.4 583.2,630.7 579.9,630.7 575.5,624.2 577.7,622.0 564.6,600.0 566.7,607.0 549.2,586.0 558.8,578.7 552.1,568.5 555.9,560.6 547.1,563.5 539.0,552.4 547.1,547.2" fill="#a4a49c" stroke="#0000ff" stroke-width="1.7"/>
<polygon points="719.6,552.3 748.2,535.4 757.5,552.3 729.8,568.4" fill="url(#hat)" stroke="#555" stroke-width="0.8" />
<polygon points="613.4,489.7 655.7,472.2 658.6,479.5 614.8,505.1" fill="url(#hat)" stroke="#555" stroke-width="0.8" />
<polygon points="374.1,789.4 384.3,782.1 392.2,790.9 381.4,799.6" fill="#a1a1a1" stroke="#3c3c3c" stroke-width="1" />
<polygon points="360.4,840.5 372.6,830.3 384.9,844.0 372.6,853.6" fill="#a1a1a1" stroke="#3c3c3c" stroke-width="1" />
<polygon points="390.1,844.9 400.3,840.5 410.6,853.6 400.3,860.9" fill="#a1a1a1" stroke="#3c3c3c" stroke-width="1" />
<polygon points="374.1,866.2 380.8,866.2 380.8,872.6 374.1,872.6" fill="#a1a1a1" stroke="#3c3c3c" stroke-width="1" />
<polygon points="384.9,903.2 397.4,881.3 409.1,887.2 398.9,910.5" fill="#a1a1a1" stroke="#3c3c3c" stroke-width="1" />
<polygon points="406.2,910.5 416.4,900.3 422.8,906.1 416.4,917.8 407.6,919.3" fill="#a1a1a1" stroke="#3c3c3c" stroke-width="1" />
<polygon points="420.8,922.2 431.0,912.0 445.6,922.2 450.0,933.0 422.2,933.0" fill="#a1a1a1" stroke="#3c3c3c" stroke-width="1" />
<polygon points="442.7,898.8 448.5,895.9 454.3,903.2 447.9,907.6" fill="#a1a1a1" stroke="#3c3c3c" stroke-width="1" />
<polygon points="499.6,895.9 505.4,893.0 509.8,900.3 503.9,904.7" fill="#a1a1a1" stroke="#3c3c3c" stroke-width="1" />
<polygon points="518.5,881.3 527.3,874.0 536.0,878.4 547.7,891.5 539.0,897.4 527.3,890.1" fill="#a1a1a1" stroke="#3c3c3c" stroke-width="1" />
<polygon points="541.9,865.3 556.5,856.5 568.1,874.0 559.4,879.9" fill="#a1a1a1" stroke="#3c3c3c" stroke-width="1" />
<polygon points="544.8,881.3 553.6,877.0 562.3,888.6 555.0,894.5" fill="#a1a1a1" stroke="#3c3c3c" stroke-width="1" />
<polygon points="568.1,881.3 576.9,877.0 581.3,885.7 572.5,890.1" fill="#a1a1a1" stroke="#3c3c3c" stroke-width="1" />
<polygon points="571.1,901.8 578.4,898.8 581.3,904.7 574.0,907.6" fill="#a1a1a1" stroke="#3c3c3c" stroke-width="1" />
<polygon points="544.8,912.0 549.2,910.5 550.6,914.9 546.3,916.4" fill="#a1a1a1" stroke="#3c3c3c" stroke-width="1" />
<polygon points="581.3,853.6 606.1,849.2 607.5,865.3 582.7,868.2" fill="#a1a1a1" stroke="#3c3c3c" stroke-width="1" />
<polygon points="614.8,855.1 626.5,849.2 635.3,856.5 630.9,869.7 614.8,871.1" fill="#a1a1a1" stroke="#3c3c3c" stroke-width="1" />
<polygon points="614.8,863.8 630.9,869.7 626.5,875.5 619.2,875.5" fill="url(#hat)" stroke="#555" stroke-width="0.8" />
<polygon points="611.9,878.4 617.8,877.8 618.3,881.9 612.5,882.8" fill="#a1a1a1" stroke="#3c3c3c" stroke-width="1" />
<polygon points="629.4,887.2 641.1,885.7 645.5,891.5 641.1,907.6 635.3,933.0 623.6,933.0 626.5,910.5" fill="#a1a1a1" stroke="#3c3c3c" stroke-width="1" />
<polygon points="597.3,916.4 611.9,912.0 620.7,933.0 585.7,933.0" fill="#a1a1a1" stroke="#3c3c3c" stroke-width="1" />
<polygon points="324.5,931.7 330.3,925.9 350.8,909.0 374.2,925.9 378.0,933.0 324.0,933.0" fill="#a1a1a1" stroke="#3c3c3c" stroke-width="1" />
<polygon points="655.7,933.0 661.5,922.2 670.0,925.1 670.0,933.0" fill="#a1a1a1" stroke="#3c3c3c" stroke-width="1" />
<polygon points="655.7,672.7 660.1,671.2 663.0,677.9 658.6,679.4" fill="#a1a1a1" stroke="#3c3c3c" stroke-width="1" />
<polygon points="754.6,645.8 795.4,648.7 788.2,745.6 767.7,744.1 766.3,739.7 747.3,736.8" fill="#a1a1a1" stroke="#3c3c3c" stroke-width="1" />
<polygon points="808.0,650.2 838.6,652.2 840.7,685.8 845.0,687.2 854.4,731.0 801.3,747.0" fill="#a1a1a1" stroke="#3c3c3c" stroke-width="1" />
<polygon points="775.0,748.5 801.3,744.1 801.3,748.5 776.5,751.4" fill="url(#hat)" stroke="#555" stroke-width="0.8" />
<circle cx="710.2" cy="662.6" r="6" fill="url(#hat)" stroke="#555" stroke-width=".8"/>
<polygon points="696.3,665.9 701.8,663.7 705.1,670.3 699.6,673.6" fill="#a1a1a1" stroke="#3c3c3c" stroke-width="1" />
<polygon points="656.8,672.5 660.1,672.0 662.7,678.0 659.6,679.5" fill="#a1a1a1" stroke="#3c3c3c" stroke-width="1" />
<polygon points="904.9,646.4 920.9,647.8 921.5,656.6 919.4,665.3 903.4,664.8" fill="#a1a1a1" stroke="#3c3c3c" stroke-width="1" />
<polygon points="884.4,644.9 890.8,644.9 890.8,652.2 884.4,652.2" fill="#a1a1a1" stroke="#3c3c3c" stroke-width="1" />
<polygon points="880.1,657.5 886.8,657.5 886.8,664.5 880.1,664.5" fill="#a1a1a1" stroke="#3c3c3c" stroke-width="1" />
<polygon points="897.6,672.6 919.4,677.0 920.9,691.6 899.0,691.6 897.0,682.9" fill="#a1a1a1" stroke="#3c3c3c" stroke-width="1" />
<polygon points="891.7,667.4 904.9,668.8 904.0,674.1 892.3,672.6" fill="#a1a1a1" stroke="#3c3c3c" stroke-width="1" />
<polygon points="878.6,687.2 894.6,688.7 894.6,698.9 885.9,696.0" fill="#a1a1a1" stroke="#3c3c3c" stroke-width="1" />
<polygon points="901.9,697.4 920.9,699.8 921.5,714.9 894.6,717.9 894.6,707.7 903.4,707.7" fill="#a1a1a1" stroke="#3c3c3c" stroke-width="1" />
<polygon points="944.0,658.7 955.1,655.3 961.0,656.2 961.9,666.4 944.0,667.2" fill="#a1a1a1" stroke="#3c3c3c" stroke-width="1" />
<polygon points="944.0,667.2 961.9,667.2 964.4,672.3 961.0,674.9 944.0,674.9" fill="#a1a1a1" stroke="#3c3c3c" stroke-width="1" />
<polygon points="948.3,676.6 959.3,676.6 960.2,692.8 947.4,692.8" fill="#a1a1a1" stroke="#3c3c3c" stroke-width="1" />
<polygon points="961.7,643.5 974.9,639.7 979.2,647.8 967.6,655.1" fill="#a1a1a1" stroke="#3c3c3c" stroke-width="1" />
<polygon points="993.8,647.8 998.2,646.4 999.7,650.2 995.3,651.3" fill="#a1a1a1" stroke="#3c3c3c" stroke-width="1" />
<polygon points="961.7,663.9 980.7,661.0 982.2,665.3 963.2,669.7" fill="url(#hat)" stroke="#555" stroke-width="0.8" />
<polygon points="942.8,713.5 953.6,712.6 954.4,724.3 942.8,724.6" fill="#a1a1a1" stroke="#3c3c3c" stroke-width="1" />
<polygon points="954.4,715.5 966.1,716.4 966.1,721.4 954.4,721.4" fill="url(#hat)" stroke="#555" stroke-width="0.8" />
<polygon points="985.1,725.2 989.5,723.7 990.9,731.0 986.5,731.9" fill="#a1a1a1" stroke="#3c3c3c" stroke-width="1" />
<polygon points="996.7,725.2 1002.6,724.3 1003.2,729.5 997.9,730.4" fill="#a1a1a1" stroke="#3c3c3c" stroke-width="1" />
<polygon points="862.5,738.3 868.4,736.8 868.4,744.1 862.5,743.5" fill="#a1a1a1" stroke="#3c3c3c" stroke-width="1" />
<polygon points="898.1,729.3 904.9,729.3 905.7,734.4 915.1,739.5 914.2,761.7 884.5,754.9 885.3,750.6 903.2,749.8 903.2,743.0 898.9,737.8" fill="#a1a1a1" stroke="#3c3c3c" stroke-width="1" />
<polygon points="891.7,766.0 909.2,768.9 909.2,777.7 891.7,773.3" fill="#a1a1a1" stroke="#3c3c3c" stroke-width="1" />
<polygon points="929.1,774.8 939.9,773.3 941.9,789.3 929.6,789.3" fill="#a1a1a1" stroke="#3c3c3c" stroke-width="1" />
<polygon points="957.4,763.1 973.4,764.5 977.8,767.5 973.4,780.6 970.5,785.0 955.9,779.1 953.0,777.7" fill="#a1a1a1" stroke="#3c3c3c" stroke-width="1" />
<polygon points="864.0,777.7 874.2,779.1 891.7,776.2 906.3,779.1 904.9,789.3 896.1,790.8 874.2,783.5 864.0,782.0" fill="#a1a1a1" stroke="#3c3c3c" stroke-width="1" />
<polygon points="915.1,792.3 931.1,796.6 931.1,812.7 923.8,814.1 913.6,806.8" fill="#a1a1a1" stroke="#3c3c3c" stroke-width="1" />
<polygon points="880.1,795.2 885.3,795.2 885.3,799.5 880.1,799.5" fill="#a1a1a1" stroke="#3c3c3c" stroke-width="1" />
<polygon points="864.0,799.5 869.8,799.5 871.3,808.3 891.7,811.2 880.1,814.1 865.5,808.3" fill="#a1a1a1" stroke="#3c3c3c" stroke-width="1" />
<polygon points="880.1,803.9 897.6,805.4 897.6,815.6 880.1,814.1" fill="#a1a1a1" stroke="#3c3c3c" stroke-width="1" />
<polygon points="868.4,822.9 891.7,820.0 893.2,831.6 868.4,828.7" fill="#a1a1a1" stroke="#3c3c3c" stroke-width="1" />
<polygon points="904.9,830.2 915.1,828.7 915.1,843.3 903.4,843.3" fill="#a1a1a1" stroke="#3c3c3c" stroke-width="1" />
<polygon points="907.8,818.5 935.5,820.0 936.9,827.3 907.8,828.7" fill="#a1a1a1" stroke="#3c3c3c" stroke-width="1" />
<polygon points="868.4,831.6 891.7,830.2 893.2,843.3 885.9,855.0 874.2,852.1 869.8,844.8" fill="#a1a1a1" stroke="#3c3c3c" stroke-width="1" />
<polygon points="929.6,824.3 948.6,822.9 950.1,831.6 934.0,837.5" fill="#a1a1a1" stroke="#3c3c3c" stroke-width="1" />
<polygon points="938.4,808.3 964.7,801.0 966.1,805.4 939.9,812.7" fill="#a1a1a1" stroke="#3c3c3c" stroke-width="1" />
<polygon points="969.0,786.4 974.9,787.9 970.5,801.0 967.6,799.5" fill="#a1a1a1" stroke="#3c3c3c" stroke-width="1" />
<polygon points="804.2,798.1 821.7,804.8 813.0,822.9 807.1,837.5 792.5,834.6 788.2,828.7 792.5,825.8" fill="#a1a1a1" stroke="#3c3c3c" stroke-width="1" />
<polygon points="817.3,824.3 845.0,834.6 840.7,850.6 811.5,843.3" fill="#a1a1a1" stroke="#3c3c3c" stroke-width="1" />
<polygon points="757.5,822.9 779.4,822.9 782.3,830.2 766.3,831.6 760.4,846.2 753.1,844.8" fill="#a1a1a1" stroke="#3c3c3c" stroke-width="1" />
<polygon points="769.2,834.6 786.7,837.5 783.8,852.1 767.7,850.6" fill="#a1a1a1" stroke="#3c3c3c" stroke-width="1" />
<polygon points="735.6,907.5 751.7,878.3 773.6,889.4 759.0,917.7" fill="#a1a1a1" stroke="#3c3c3c" stroke-width="1" />
<polygon points="783.8,895.8 788.2,887.1 811.5,898.7 807.1,907.5" fill="#a1a1a1" stroke="#3c3c3c" stroke-width="1" />
<polygon points="826.1,910.4 829.0,903.1 887.3,919.2 884.4,930.8" fill="#a1a1a1" stroke="#3c3c3c" stroke-width="1" />
<polygon points="709.4,884.2 721.1,882.7 728.3,888.5 726.9,898.7 707.9,895.8" fill="#a1a1a1" stroke="#3c3c3c" stroke-width="1" />
<polygon points="678.8,913.3 693.3,898.7 725.4,901.7 734.2,913.3 728.3,932.9 678.8,932.9" fill="#a1a1a1" stroke="#3c3c3c" stroke-width="1" />
<polygon points="897.6,922.1 901.9,920.6 932.6,932.9 897.6,932.9" fill="#a1a1a1" stroke="#3c3c3c" stroke-width="1" />
<polygon points="807.1,922.1 820.2,916.2 830.5,932.9 807.1,932.9" fill="#a1a1a1" stroke="#3c3c3c" stroke-width="1" />
<polygon points="670.0,897.3 681.7,901.7 680.2,907.5 670.0,907.5" fill="#a1a1a1" stroke="#3c3c3c" stroke-width="1" />
<polygon points="839.2,925.0 848.0,922.1 850.9,932.9 840.7,932.9" fill="#a1a1a1" stroke="#3c3c3c" stroke-width="1" />
<polyline points="408.4,846.6 475.8,790.0" fill="none" stroke="#444" stroke-width="0.9" />
<polyline points="408.4,846.6 461.1,900.0" fill="none" stroke="#444" stroke-width="0.9" />
<polyline points="434.0,825.9 491.6,893.4" fill="none" stroke="#444" stroke-width="0.9" />
<polyline points="442.8,818.6 496.0,879.1" fill="none" stroke="#444" stroke-width="0.9" />
<polyline points="450.2,816.6 506.4,880.6" fill="none" stroke="#444" stroke-width="0.9" />
<polyline points="464.5,801.3 525.1,859.9" fill="none" stroke="#444" stroke-width="0.9" />
<polyline points="415.8,855.5 400.0,875.7" fill="none" stroke="#444" stroke-width="0.9" />
<polyline points="430.5,871.7 408.9,900.0" fill="none" stroke="#444" stroke-width="0.9" />
<polyline points="446.3,887.5 436.4,900.0" fill="none" stroke="#444" stroke-width="0.9" />
<polyline points="511.3,872.7 528.0,900.0" fill="none" stroke="#444" stroke-width="0.9" />
<polygon points="414.8,818.6 423.1,811.2 429.5,817.1 421.2,825.0" fill="#ababab" stroke="#555" stroke-width="0.8" />
<polygon points="420.2,837.8 427.6,831.4 429.1,834.3 422.7,841.7" fill="#ababab" stroke="#555" stroke-width="0.8" />
<polygon points="429.5,829.9 435.0,825.9 440.4,831.4 435.0,836.3" fill="#ababab" stroke="#555" stroke-width="0.8" />
<polygon points="443.3,818.6 451.2,812.2 453.7,815.6 445.3,820.0" fill="#ababab" stroke="#555" stroke-width="0.8" />
<polygon points="452.2,851.1 456.6,846.1 465.0,854.5 459.6,858.9" fill="#ababab" stroke="#555" stroke-width="0.8" />
<polygon points="467.5,867.8 472.9,863.4 479.8,869.8 474.8,876.7" fill="#ababab" stroke="#555" stroke-width="0.8" />
<polygon points="466.0,874.7 469.9,871.7 486.7,888.5 483.7,892.4" fill="#ababab" stroke="#555" stroke-width="0.8" />
<polygon points="482.2,846.1 485.7,843.2 493.6,852.0 489.6,855.0" fill="#ababab" stroke="#555" stroke-width="0.8" />
<polygon points="489.1,858.9 492.1,854.0 496.0,858.0 492.6,861.4" fill="#ababab" stroke="#555" stroke-width="0.8" />
<polygon points="480.8,882.1 487.7,876.2 495.5,885.0 489.1,891.4" fill="#a1a1a1" stroke="#3c3c3c" stroke-width="1" />
<polygon points="489.6,876.7 498.5,864.4 507.3,872.2 500.5,882.6" fill="#a1a1a1" stroke="#3c3c3c" stroke-width="1" />
<polygon points="501.4,855.0 509.3,850.1 518.2,858.9 512.3,865.8" fill="#a1a1a1" stroke="#3c3c3c" stroke-width="1" />
<polygon points="462.0,900.0 470.9,885.0 480.8,894.4 476.8,900.0" fill="#a1a1a1" stroke="#3c3c3c" stroke-width="1" />
<polygon points="323.0,887.2 340.5,898.8 334.7,933.0 323.0,933.0" fill="#d8d8d8"/>
<text x="527.8" y="294.4" font-size="10" fill="#1a1a1a" stroke="#1a1a1a" stroke-width=".15" text-anchor="middle" dominant-baseline="central" transform="rotate(0 527.8 294.4)" >1239</text>
<text x="569.3" y="307.7" font-size="10" fill="#1a1a1a" stroke="#1a1a1a" stroke-width=".15" text-anchor="middle" dominant-baseline="central" transform="rotate(0 569.3 307.7)" >1239</text>
<text x="494.2" y="343.9" font-size="10" fill="#1a1a1a" stroke="#1a1a1a" stroke-width=".15" text-anchor="middle" dominant-baseline="central" transform="rotate(0 494.2 343.9)" >1240</text>
<text x="467.9" y="366.4" font-size="10" fill="#1a1a1a" stroke="#1a1a1a" stroke-width=".15" text-anchor="middle" dominant-baseline="central" transform="rotate(0 467.9 366.4)" >1241</text>
<text x="616.8" y="410.9" font-size="10" fill="#1a1a1a" stroke="#1a1a1a" stroke-width=".15" text-anchor="middle" dominant-baseline="central" transform="rotate(0 616.8 410.9)" >1234</text>
<text x="556.5" y="455.9" font-size="10" fill="#1a1a1a" stroke="#1a1a1a" stroke-width=".15" text-anchor="middle" dominant-baseline="central" transform="rotate(0 556.5 455.9)" >1238</text>
<text x="468.5" y="485.6" font-size="10" fill="#1a1a1a" stroke="#1a1a1a" stroke-width=".15" text-anchor="middle" dominant-baseline="central" transform="rotate(0 468.5 485.6)" font-weight="bold">1246</text>
<text x="664.5" y="356.2" font-size="10" fill="#1a1a1a" stroke="#1a1a1a" stroke-width=".15" text-anchor="middle" dominant-baseline="central" transform="rotate(0 664.5 356.2)" >1230-1230F</text>
<text x="698.1" y="318.9" font-size="10" fill="#1a1a1a" stroke="#1a1a1a" stroke-width=".15" text-anchor="middle" dominant-baseline="central" transform="rotate(0 698.1 318.9)" >1224B-1224C</text>
<text x="402.6" y="410.9" font-size="10" fill="#1a1a1a" stroke="#1a1a1a" stroke-width=".15" text-anchor="middle" dominant-baseline="central" transform="rotate(0 402.6 410.9)" >1247B</text>
<text x="559.5" y="379.2" font-size="9" fill="#1a1a1a" stroke="#1a1a1a" stroke-width=".15" text-anchor="middle" dominant-baseline="central" transform="rotate(-40 559.5 379.2)" >Industriepark</text>
<text x="572.3" y="430.6" font-size="9" fill="#1a1a1a" stroke="#1a1a1a" stroke-width=".15" text-anchor="middle" dominant-baseline="central" transform="rotate(55 572.3 430.6)" >Industriepark</text>
<text x="849.4" y="312.5" font-size="10" fill="#1a1a1a" stroke="#1a1a1a" stroke-width=".15" text-anchor="middle" dominant-baseline="central" transform="rotate(0 849.4 312.5)" >1118</text>
<text x="856.7" y="382.5" font-size="10" fill="#1a1a1a" stroke="#1a1a1a" stroke-width=".15" text-anchor="middle" dominant-baseline="central" transform="rotate(0 856.7 382.5)" >1114-1116</text>
<text x="875.7" y="440.9" font-size="10" fill="#1a1a1a" stroke="#1a1a1a" stroke-width=".15" text-anchor="middle" dominant-baseline="central" transform="rotate(0 875.7 440.9)" >1110-1110A</text>
<text x="651.0" y="560.0" font-size="10" fill="#1a1a1a" stroke="#1a1a1a" stroke-width=".15" text-anchor="middle" dominant-baseline="central" transform="rotate(0 651.0 560.0)" >1003</text>
<text x="932.0" y="597.0" font-size="8.5" fill="#1a1a1a" stroke="#1a1a1a" stroke-width=".15" text-anchor="middle" dominant-baseline="central" transform="rotate(90 932.0 597.0)" >Industriepark</text>
<text x="363.9" y="688.1" font-size="9" fill="#1a1a1a" stroke="#1a1a1a" stroke-width=".15" text-anchor="middle" dominant-baseline="central" transform="rotate(27 363.9 688.1)" >Staatsbaan</text>
<text x="601.7" y="748.0" font-size="9" fill="#555" stroke="#555" stroke-width=".15" text-anchor="middle" dominant-baseline="central" transform="rotate(50 601.7 748.0)" >Velpe</text>
<text x="652.8" y="823.0" font-size="9" fill="#1a1a1a" stroke="#1a1a1a" stroke-width=".15" text-anchor="middle" dominant-baseline="central" transform="rotate(15 652.8 823.0)" >Staatsbaan</text>
<text x="533.1" y="866.7" font-size="8.5" fill="#1a1a1a" stroke="#1a1a1a" stroke-width=".15" text-anchor="middle" dominant-baseline="central" transform="rotate(-35 533.1 866.7)" >Singelaan</text>
<text x="652.8" y="860.9" font-size="8.5" fill="#1a1a1a" stroke="#1a1a1a" stroke-width=".15" text-anchor="middle" dominant-baseline="central" transform="rotate(-45 652.8 860.9)" >Rijnrodebeek</text>
<text x="356.0" y="913.0" font-size="9" fill="#1a1a1a" stroke="#1a1a1a" stroke-width=".15" text-anchor="middle" dominant-baseline="central" transform="rotate(24 356.0 913.0)" >Diestersteenweg</text>
<text x="397.4" y="897.4" font-size="10" fill="#1a1a1a" stroke="#1a1a1a" stroke-width=".15" text-anchor="middle" dominant-baseline="central" transform="rotate(0 397.4 897.4)" >13</text>
<text x="413.5" y="910.5" font-size="10" fill="#1a1a1a" stroke="#1a1a1a" stroke-width=".15" text-anchor="middle" dominant-baseline="central" transform="rotate(0 413.5 910.5)" >11</text>
<text x="429.5" y="922.2" font-size="10" fill="#1a1a1a" stroke="#1a1a1a" stroke-width=".15" text-anchor="middle" dominant-baseline="central" transform="rotate(0 429.5 922.2)" >9</text>
<text x="569.0" y="857.4" font-size="10" fill="#1a1a1a" stroke="#1a1a1a" stroke-width=".15" text-anchor="middle" dominant-baseline="central" transform="rotate(0 569.0 857.4)" font-weight="bold">11A</text>
<text x="602.6" y="858.0" font-size="10" fill="#1a1a1a" stroke="#1a1a1a" stroke-width=".15" text-anchor="middle" dominant-baseline="central" transform="rotate(0 602.6 858.0)" >15</text>
<text x="557.9" y="866.2" font-size="10" fill="#1a1a1a" stroke="#1a1a1a" stroke-width=".15" text-anchor="middle" dominant-baseline="central" transform="rotate(0 557.9 866.2)" >9</text>
<text x="552.7" y="886.6" font-size="10" fill="#1a1a1a" stroke="#1a1a1a" stroke-width=".15" text-anchor="middle" dominant-baseline="central" transform="rotate(0 552.7 886.6)" >5</text>
<text x="529.6" y="887.8" font-size="10" fill="#1a1a1a" stroke="#1a1a1a" stroke-width=".15" text-anchor="middle" dominant-baseline="central" transform="rotate(0 529.6 887.8)" >1</text>
<text x="912.7" y="652.8" font-size="10" fill="#1a1a1a" stroke="#1a1a1a" stroke-width=".15" text-anchor="middle" dominant-baseline="central" transform="rotate(0 912.7 652.8)" >32</text>
<text x="912.1" y="661.6" font-size="10" fill="#1a1a1a" stroke="#1a1a1a" stroke-width=".15" text-anchor="middle" dominant-baseline="central" transform="rotate(0 912.1 661.6)" >30</text>
<text x="909.2" y="687.2" font-size="10" fill="#1a1a1a" stroke="#1a1a1a" stroke-width=".15" text-anchor="middle" dominant-baseline="central" transform="rotate(0 909.2 687.2)" >26</text>
<text x="912.7" y="703.3" font-size="10" fill="#1a1a1a" stroke="#1a1a1a" stroke-width=".15" text-anchor="middle" dominant-baseline="central" transform="rotate(0 912.7 703.3)" >24</text>
<text x="947.7" y="719.3" font-size="10" fill="#1a1a1a" stroke="#1a1a1a" stroke-width=".15" text-anchor="middle" dominant-baseline="central" transform="rotate(0 947.7 719.3)" >9A</text>
<text x="934.3" y="781.5" font-size="10" fill="#1a1a1a" stroke="#1a1a1a" stroke-width=".15" text-anchor="middle" dominant-baseline="central" transform="rotate(0 934.3 781.5)" >5A</text>
<text x="889.4" y="809.2" font-size="10" fill="#1a1a1a" stroke="#1a1a1a" stroke-width=".15" text-anchor="middle" dominant-baseline="central" transform="rotate(0 889.4 809.2)" >6</text>
<text x="888.2" y="823.5" font-size="10" fill="#1a1a1a" stroke="#1a1a1a" stroke-width=".15" text-anchor="middle" dominant-baseline="central" transform="rotate(0 888.2 823.5)" >4</text>
<text x="879.5" y="834.0" font-size="10" fill="#1a1a1a" stroke="#1a1a1a" stroke-width=".15" text-anchor="middle" dominant-baseline="central" transform="rotate(0 879.5 834.0)" >2A</text>
<text x="921.5" y="823.5" font-size="10" fill="#1a1a1a" stroke="#1a1a1a" stroke-width=".15" text-anchor="middle" dominant-baseline="central" transform="rotate(0 921.5 823.5)" >1</text>
<text x="909.2" y="835.1" font-size="10" fill="#1a1a1a" stroke="#1a1a1a" stroke-width=".15" text-anchor="middle" dominant-baseline="central" transform="rotate(0 909.2 835.1)" >1</text>
<text x="805.7" y="819.4" font-size="10" fill="#1a1a1a" stroke="#1a1a1a" stroke-width=".15" text-anchor="middle" dominant-baseline="central" transform="rotate(0 805.7 819.4)" >3</text>
<text x="827.5" y="838.1" font-size="10" fill="#1a1a1a" stroke="#1a1a1a" stroke-width=".15" text-anchor="middle" dominant-baseline="central" transform="rotate(0 827.5 838.1)" >1A-1B</text>
<text x="761.9" y="834.6" font-size="10" fill="#1a1a1a" stroke="#1a1a1a" stroke-width=".15" text-anchor="middle" dominant-baseline="central" transform="rotate(0 761.9 834.6)" >11</text>
<text x="754.6" y="898.2" font-size="10" fill="#1a1a1a" stroke="#1a1a1a" stroke-width=".15" text-anchor="middle" dominant-baseline="central" transform="rotate(0 754.6 898.2)" >10</text>
<text x="804.8" y="900.2" font-size="10" fill="#1a1a1a" stroke="#1a1a1a" stroke-width=".15" text-anchor="middle" dominant-baseline="central" transform="rotate(0 804.8 900.2)" >12</text>
<text x="856.1" y="916.8" font-size="10" fill="#1a1a1a" stroke="#1a1a1a" stroke-width=".15" text-anchor="middle" dominant-baseline="central" transform="rotate(0 856.1 916.8)" >13B</text>
<text x="967.3" y="912.7" font-size="9" fill="#1a1a1a" stroke="#1a1a1a" stroke-width=".15" text-anchor="middle" dominant-baseline="central" transform="rotate(10 967.3 912.7)" >Staatsbaan</text>
<text x="911.6" y="790.8" font-size="8.5" fill="#1a1a1a" stroke="#1a1a1a" stroke-width=".15" text-anchor="middle" dominant-baseline="central" transform="rotate(-78 911.6 790.8)" >Mosstraat</text>
<text x="856.9" y="827.6" font-size="8.5" fill="#555" stroke="#555" stroke-width=".15" text-anchor="middle" dominant-baseline="central" transform="rotate(80 856.9 827.6)" >Velpe</text>
</g>
<g transform="translate(376,282.5)">
<circle r="30.5" fill="#fff" fill-opacity=".85" stroke="#222" stroke-width=".9"/>
<circle r="25" fill="none" stroke="#222" stroke-width=".9"/>
<path d="M0,-39 L4,-4 L39,0 L4,4 L0,39 L-4,4 L-39,0 L-4,-4 Z" fill="#000"/>
<path d="M13,-13 L3,2 L-2,-3 Z M13,13 L-2,3 L3,-2 Z M-13,13 L-3,-2 L2,3 Z M-13,-13 L2,-3 L-3,2 Z" fill="#000"/>
<circle r="5" fill="#fff"/>
</g>
<text x="375.6" y="239" font-size="9" text-anchor="middle" fill="#000">N</text>
<g transform="translate(544,617)">
<rect width="24.5" height="23.5" fill="#0a8a1a"/>
<path d="M2 2L7 7M2 2V6M2 2H6 M22.5 2L17.5 7M22.5 2V6M22.5 2H18.5 M2 21.5L7 16.5M2 21.5V17.5M2 21.5H6 M22.5 21.5L17.5 16.5M22.5 21.5V17.5M22.5 21.5H18.5" stroke="#fff" stroke-width="1.3" fill="none"/>
<circle cx="12.2" cy="8" r="1.8" fill="#fff"/><circle cx="8.5" cy="10" r="1.6" fill="#fff"/><circle cx="16" cy="10" r="1.6" fill="#fff"/>
<path d="M9.5 17V12.5Q12.2 10.5 15 12.5V17Z M6 17V13.5Q8 12 9.5 13V17Z M15 17V13Q16.5 12 18.5 13.5V17Z" fill="#fff"/>
</g>
</svg><!--MAPEND-->
<!-- scale bar -->
<div class="t" style="left:374px;top:956px;font-size:10.5px;letter-spacing:.6px">100 m</div>
<div class="a" style="left:336px;top:970px;width:112px;height:8px;border:1px solid #c8c8c8;background:linear-gradient(90deg,#808080 0 20%,#fff 20% 40%,#808080 40% 60%,#fff 60% 80%,#808080 80%)"></div>
<!-- bottom tabs -->
<svg class="a" style="left:313px;top:1011px" width="734" height="26">
<defs><linearGradient id="tg" x1="0" y1="0" x2="0" y2="1"><stop offset="0" stop-color="#fafafa"/><stop offset="1" stop-color="#e4e4e4"/></linearGradient></defs>
<path d="M108 2.5H213Q215 2.5 215 4.5V21.5L213 22.5H110L108 20Z M215 2.5H286Q288 2.5 288 4.5V21.5H218L215 20Z M288 2.5H349Q351 2.5 351 4.5V21.5H291L288 20Z M351 2.5H435Q437 2.5 437 4.5V21.5H354L351 20Z" fill="url(#tg)" stroke="#a0a0a0" stroke-width="1"/>
<path d="M0 2.5L26 21.5H106Q108 21.5 108 19V2.5" fill="#fff" stroke="#a0a0a0" stroke-width="1"/>
</svg>
<svg class="a" style="left:342px;top:1016px" width="18" height="16"><rect x="1" y="1" width="13" height="14" fill="#fff" stroke="#aaa"/><path d="M4 13L6 9L14 1L16 3L8 11Z" fill="#f5c040" stroke="#b07820" stroke-width=".8"/><path d="M3 14Q4 10 7 11" stroke="#4a8ad0" stroke-width="2" fill="none"/></svg>
<div class="t" style="left:362px;top:1019px;font-size:11.5px;font-weight:bold">Tekening</div>
<svg class="a" style="left:430px;top:1016px" width="15" height="16"><rect x="1.5" y="1" width="12" height="14" fill="#fff" stroke="#aaa"/><path d="M2 1V15" stroke="#c06020" stroke-width="2"/><path d="M5 5H11M5 8H11" stroke="#4a8ad0" stroke-width="1.5"/></svg>
<div class="t" style="left:448px;top:1019px;font-size:11px">Eigenschappen</div>
<svg class="a" style="left:536px;top:1016px" width="16" height="16"><rect x="1" y="1" width="14" height="11" fill="#fde8a8" stroke="#c06020"/><path d="M1 5H15M1 8H15" stroke="#c06020"/><circle cx="5" cy="13" r="2.5" fill="none" stroke="#2a3a9a" stroke-width="1.5"/><circle cx="11" cy="13" r="2.5" fill="none" stroke="#2a3a9a" stroke-width="1.5"/></svg>
<div class="t" style="left:555px;top:1019px;font-size:11.5px">Relaties</div>
<svg class="a" style="left:609px;top:1016px" width="16" height="16"><rect x="1.5" y="1.5" width="13" height="13" fill="#8ab8e8" stroke="#3a6aa8" stroke-width="1.3"/><rect x="3.5" y="3.5" width="9" height="9" fill="#b8d8f8"/></svg>
<div class="t" style="left:628px;top:1019px;font-size:11.5px">Media</div>
<svg class="a" style="left:673px;top:1016px" width="16" height="16"><path d="M4 5H7V2H10V5H13V8H15V11H13V14H4V11H1V8H4Z" fill="#5ab048" stroke="#3a8a30" stroke-width=".8"/></svg>
<div class="t" style="left:692px;top:1019px;font-size:11.5px">Rapporten</div>

<!-- RIGHT PANEL -->
<div class="a" style="left:1313px;top:81px;width:2px;height:961px;background:#fff"></div>
<svg class="a" style="left:1050px;top:129px" width="264" height="25">
<path d="M0 23.5H12.5L34 3.5H113Q115.5 3.5 115.5 6V23.5H264" fill="#fff" stroke="#a9a9a9" stroke-width="1"/>
</svg>
<svg class="a" style="left:1088px;top:134px" width="16" height="16"><path d="M4 5H7V2H10V5H13V8H15V11H13V14H4V11H1V8H4Z" fill="#5ab048" stroke="#3a8a30" stroke-width=".8"/></svg>
<div class="t" style="left:1107px;top:136px;font-size:10.8px">Bibliotheek</div>
<div class="ph" style="left:1057px;top:155px;width:256px;height:19px"></div>
<div class="t" style="left:1062px;top:158px;font-size:10.8px">Bibliotheek</div>
<div class="a" style="left:1228px;top:160px;width:10px;height:9px;border:1.2px solid #000"></div>
<svg class="a" style="left:1247px;top:159px" width="12" height="11"><path d="M1.5 4.5H7.5V9.5H1.5Z M4 4.5V1.5H10V7H7.5" fill="none" stroke="#000" stroke-width="1.2"/></svg>
<svg class="a" style="left:1269px;top:159px" width="9" height="11"><path d="M2.5 1V6M6.5 1V6M2 1H7M0.5 6H8.5M4.5 6V10.5" fill="none" stroke="#000" stroke-width="1.3"/></svg>
<svg class="a" style="left:1288px;top:159px" width="9" height="9"><path d="M.5 .5L8.5 8.5M8.5 .5L.5 8.5" stroke="#000" stroke-width="1"/></svg>
<div class="a" style="left:1057px;top:174px;width:253px;height:250px;background:#fff;border:1px solid #7d848c;border-top-width:2px;border-left-width:2px;overflow:hidden">
<div class="a" style="right:0;top:0;width:20px;height:250px;background:#efefef"></div>
<div class="a" style="left:238px;top:21px;width:6px;height:168px;background:#858585"></div>
<div class="a" style="left:0;top:0px;font-size:10.8px;line-height:16px;white-space:nowrap">Afsluiter<br>Automatische blusinstallatie<br>Bestemming van lokalen<br>Blusmiddel<br>Bluswatervoorziening<br>Compartimentering<br>Eerste hulp<br>Evacuatie<br>Evacuatieplan<br>Gevaarlijke stof<br>Gevaren<br>Interventie<br>Locaties<br>Melding &amp; detectie<br>Noodverlichting<br>Plaatsbepaal</div>
</div>
<div class="a" style="left:1057px;top:428px;width:253px;height:607px;background:#fff;border:1px solid #7d848c;border-top-width:2px;border-left-width:2px"></div>
<!-- STATUS -->
<svg class="a" style="left:57px;top:1047px" width="16" height="16"><path d="M2 14L3 10L12 1L15 4L6 13Z" fill="#f5c040" stroke="#a86a10" stroke-width=".9"/><path d="M2 14L3 10L6 13Z" fill="#f0d8b0"/></svg>
<div class="t" style="left:75px;top:1050px;font-size:11px">wim</div>
<div class="a" style="left:121px;top:1046px;width:1px;height:17px;background:#a0a0a0"></div>
<div class="a" style="left:360px;top:1046px;width:1px;height:17px;background:#a0a0a0"></div>
<div class="a" style="left:496px;top:1046px;width:1px;height:17px;background:#a0a0a0"></div>
<div class="a" style="left:633px;top:1046px;width:1px;height:17px;background:#a0a0a0"></div>
<div class="a" style="left:768px;top:1046px;width:1px;height:17px;background:#a0a0a0"></div>
<div class="a" style="left:904px;top:1046px;width:1px;height:17px;background:#a0a0a0"></div>
<div class="a" style="left:1200px;top:1046px;width:1px;height:17px;background:#a0a0a0"></div>
<div class="t" style="left:502px;top:1050px;font-size:11px">x:</div>
<div class="t" style="left:639px;top:1050px;font-size:11px">y:</div>
<div class="t" style="left:775px;top:1050px;font-size:11px">l:</div>
<svg class="a" style="left:911px;top:1046px" width="17" height="17"><path d="M3 7Q3 2 8.5 2Q14 2 14 7M5.5 7Q5.5 4.5 8.5 4.5Q11.5 4.5 11.5 7" fill="none" stroke="#888" stroke-width="1.3"/><path d="M8.5 7L5 16M8.5 7L12 16M6.5 12H10.5" stroke="#777" stroke-width="1.3"/></svg>
<div class="a" style="left:938px;top:1049px;width:257px;height:11px;background:#e6e6e6;border:1px solid #b8b8b8"></div>
<svg class="a" style="left:1206px;top:1046px" width="17" height="17"><circle cx="8.5" cy="8.5" r="7" fill="#f0f4f8" stroke="#c08a30" stroke-width="1.5"/><path d="M8.5 4V8.5H12" stroke="#2a4a8a" stroke-width="1.2" fill="none"/></svg>
<div class="t" style="left:1227px;top:1050px;font-size:11px">16:44:44</div>


<div class="badge" style="left:347px;top:95px"><svg width="36" height="36" style="position:absolute;left:0;top:0"><path d="M15.5 12.6L19.5 9.5H21.3V27H18V14.2L15.5 15.6Z" fill="#fff"/></svg></div>
<div class="badge" style="left:143px;top:344px">2</div>
<div class="badge" style="left:625px;top:235px">3</div>
<div class="badge" style="left:1161px;top:409px">4</div>
</body></html>
